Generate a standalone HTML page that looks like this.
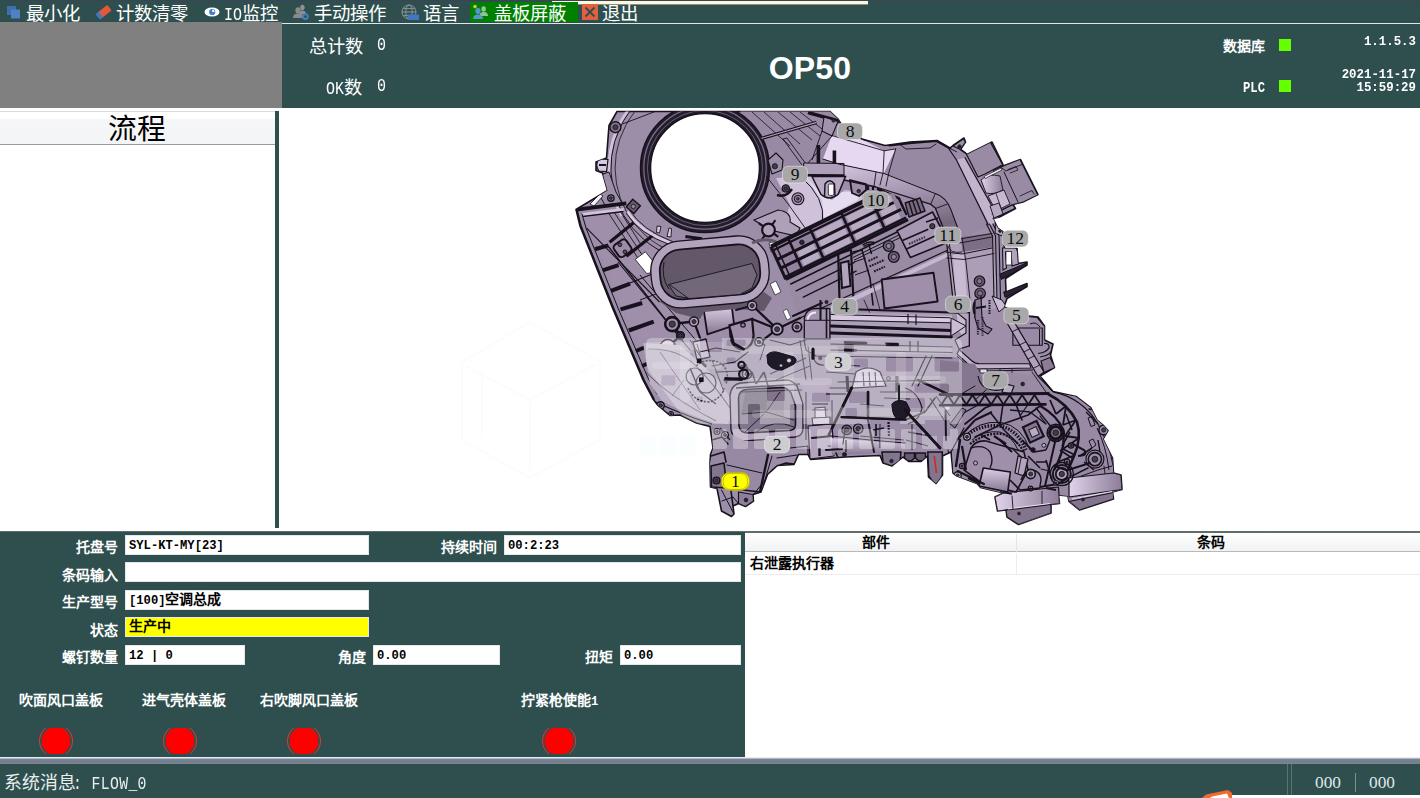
<!DOCTYPE html>
<html lang="zh-CN">
<head>
<meta charset="utf-8">
<title>OP50</title>
<style>
*{box-sizing:border-box;margin:0;padding:0}
html,body{width:1420px;height:798px;overflow:hidden;background:#fff}
body{position:relative;font-family:"Liberation Serif",serif;color:#fff}
.abs{position:absolute}
.m{font-family:"Liberation Mono",monospace}
.t{display:inline-block;transform:scaleY(1.22);transform-origin:0 76%}
.teal{background:#2f4f4f}
/* toolbar */
#toolbar{left:0;top:0;width:1420px;height:24px;background:#2f4f4f}
#toolbar .edge{left:0;top:0;width:1420px;height:1px;background:#3b4357}
#toolbar .cream{left:552px;top:0.5px;width:316px;height:4px;background:#fdf8dc;border-bottom:1px solid #8c8f80}
#toolbar .line{left:282px;top:23px;width:1138px;height:1px;background:#dfe6e6}
.tb{position:absolute;top:3.5px;height:20px;line-height:20px;font-size:18.4px;white-space:nowrap;color:#fff}
.tbi{position:absolute;top:4px;width:18px;height:16px}
#tbgreen{left:469.5px;top:2px;width:108px;height:20px;background:#008000}
/* header */
#grayblk{left:0;top:22px;width:282px;height:86px;background:#808080}
#header{left:282px;top:24px;width:1138px;height:84px;background:#2f4f4f}
.cnt{position:absolute;font-size:18.2px;line-height:20px;margin-top:1.4px;white-space:nowrap}
#op{left:710px;top:49px;width:200px;text-align:center;font-family:"Liberation Sans",sans-serif;font-weight:bold;font-size:32px;line-height:38px;letter-spacing:.2px}
.st{position:absolute;font-weight:bold;font-size:14px;line-height:16px;white-space:nowrap;text-align:right}
.lamp{position:absolute;width:12px;height:12px;background:#66ff00}
/* left panel */
#flowhead{left:0;top:111px;width:275px;height:34px;background:linear-gradient(#ffffff 0,#ffffff 20%,#f5f6f8 24%,#f4f5f7 100%);border-top:1px solid #d9d9d9;border-bottom:1px solid #9a9a9a;color:#000;font-size:28.8px;line-height:35px;padding-right:1px;overflow:hidden;text-align:center}
#divider{left:275px;top:111px;width:4px;height:417px;background:#2f4f4f}
/* bottom form */
#form{left:0;top:532px;width:745px;height:225px;background:#2f4f4f}
#topline{left:0;top:531px;width:1420px;height:2px;background:#5f6d6d}
.lb{position:absolute;font-weight:bold;font-size:14px;line-height:18px;white-space:nowrap;text-align:right;color:#fff}
.in .m{font-size:12.17px}
.in{position:absolute;height:20px;background:#fff;color:#000;font-weight:bold;font-size:14px;line-height:18px;padding-left:3px;white-space:nowrap;overflow:hidden;border:1px solid #e4e8e8}
.cl{position:absolute;font-weight:bold;font-size:14px;line-height:18px;white-space:nowrap;color:#fff}
.led{position:absolute;top:728px;width:34px;height:26px;overflow:hidden}
.led i{position:absolute;left:0;top:-4px;width:34px;height:34px;border-radius:50%;border:1px solid #e03535;background:radial-gradient(circle,#ff0000 0,#ff0000 14px,#3c4a4a 14.6px,#3c4a4a 15.4px,transparent 16px)}
/* table */
#tbl{left:745px;top:533px;width:675px;height:224px;background:#fff;color:#000}
#th{left:0;top:0;width:675px;height:19px;background:linear-gradient(#ffffff,#f1f2f4);border-bottom:1px solid #b9b9b9}
.thc{position:absolute;top:1px;height:18px;line-height:18px;font-weight:bold;font-size:14px;text-align:center;color:#000}
#tr1{left:0;top:20px;width:675px;height:22px;border-bottom:1px solid #ececec}
/* status bar */
#sep{left:0;top:757px;width:1420px;height:7px;background:linear-gradient(#e8ecf0 0,#e8ecf0 1px,#75849a 2px,#708090 5px,#8a8088 7px)}
#status{left:0;top:764px;width:1420px;height:34px;background:#2f4f4f}
</style>
</head>
<body>

<!-- ===== toolbar ===== -->
<div id="toolbar" class="abs">
  <div class="abs edge"></div>
  <div class="abs line"></div>
  <div class="abs cream"></div>
  <div id="tbgreen" class="abs"></div>

  <svg class="tbi" style="left:5px" viewBox="0 0 18 16"><rect x="2" y="2" width="9" height="9" fill="#3f6fae"/><rect x="6" y="5.5" width="9" height="9" fill="#4f82c4"/></svg>
  <span class="tb" style="left:26px">最小化</span>

  <svg class="tbi" style="left:95px" viewBox="0 0 18 16"><g transform="rotate(-38 9 8)"><rect x="3" y="4.5" width="13" height="7" rx="1" fill="#e2593a"/><rect x="1" y="4.5" width="4" height="7" rx="1" fill="#3f77c2"/></g></svg>
  <span class="tb" style="left:116px">计数清零</span>

  <svg class="tbi" style="left:203px" viewBox="0 0 18 16"><ellipse cx="9" cy="8" rx="7.5" ry="4.6" fill="#fff"/><circle cx="9.2" cy="8" r="3.1" fill="#3f7fd0"/><path d="M9.2 8 L9.2 5.6 A2.4 2.4 0 0 1 11.6 8Z" fill="#fff"/></svg>
  <span class="tb" style="left:224px"><span class="m t" style="font-size:15px">IO</span>监控</span>

  <svg class="tbi" style="left:292px" viewBox="0 0 18 16"><ellipse cx="10.4" cy="3.6" rx="2.2" ry="2.8" fill="#8f8f8f"/><path d="M7 11 Q7 6.8 10.6 6.8 Q14 6.8 14 10Z" fill="#8f8f8f"/><ellipse cx="6" cy="6.4" rx="2.6" ry="3.1" fill="#8a8a8a"/><path d="M1 14 Q1 9.6 6 9.6 Q11 9.6 11 14Z" fill="#8a8a8a"/><circle cx="13.4" cy="12.6" r="3.4" fill="#3f7fc8"/><circle cx="13.4" cy="12.6" r="1.3" fill="#2f4f4f"/></svg>
  <span class="tb" style="left:314px">手动操作</span>

  <svg class="tbi" style="left:401px" viewBox="0 0 18 16"><circle cx="8" cy="8" r="7" fill="none" stroke="#8a9494" stroke-width="1"/><ellipse cx="8" cy="8" rx="3.2" ry="7" fill="none" stroke="#8a9494" stroke-width="1"/><path d="M1 8H15M2 4.6H14M2 11.4H14" stroke="#8a9494" stroke-width="1" fill="none"/><rect x="7" y="10.5" width="11" height="5.5" fill="#3f77c2"/></svg>
  <span class="tb" style="left:423px">语言</span>

  <svg class="tbi" style="left:472px" viewBox="0 0 18 16"><ellipse cx="11.6" cy="5" rx="2.3" ry="2.7" fill="#8fc493"/><path d="M7.6 12 Q7.6 8 11.8 8 Q16 8 16 12Z" fill="#8fc493"/><ellipse cx="6" cy="7" rx="2.6" ry="3" fill="#5b93d2"/><path d="M1 15 Q1 10.4 6 10.4 Q11 10.4 11 15Z" fill="#5b93d2"/><circle cx="3" cy="2.6" r="1.8" fill="#d8c23a"/></svg>
  <span class="tb" style="left:494px">盖板屏蔽</span>

  <svg class="tbi" style="left:581px" viewBox="0 0 18 16"><rect x="1" y="0" width="16" height="16" fill="#e0603f"/><path d="M4.5 3.5L13.5 12.5M13.5 3.5L4.5 12.5" stroke="#2f4f4f" stroke-width="1.8" fill="none"/></svg>
  <span class="tb" style="left:602px">退出</span>
</div>

<!-- ===== header ===== -->
<div id="header" class="abs"></div>
<div id="grayblk" class="abs"></div>
<span class="cnt" style="left:309px;top:36px">总计数</span><span class="cnt m t" style="left:377px;top:36px;font-size:15px">0</span>
<span class="cnt" style="left:326px;top:77px"><span class="m t" style="font-size:15px">OK</span>数</span><span class="cnt m t" style="left:377px;top:77px;font-size:15px">0</span>
<div id="op" class="abs">OP50</div>
<span class="st" style="right:155px;top:39px">数据库</span>
<span class="st m" style="right:155px;top:79.8px;font-size:12.2px;transform:scaleY(1.2)">PLC</span>
<div class="lamp" style="left:1279px;top:39px"></div>
<div class="lamp" style="left:1279px;top:80px"></div>
<span class="st m" style="right:4px;top:33.8px;font-size:12.4px;transform:scaleY(1.1)">1.1.5.3</span>
<span class="st m" style="right:4px;top:69px;line-height:12px;font-size:12.4px;transform:scaleY(1.1)">2021-11-17<br>15:59:29</span>

<!-- ===== left panel ===== -->
<div id="flowhead" class="abs">流程</div>
<div id="divider" class="abs"></div>

<!-- ===== CAD image ===== -->
<svg id="cad" class="abs" style="left:279px;top:108px" width="1141" height="424" viewBox="279 108 1141 424">
<!--CAD-->
<defs>
<clipPath id="sil"><path id="silp" d="M617 111.5 L830 111.5 L838 119 L841 124 L862 139 L885 145.5 L910 142 L937 140.5 L950 148 L953 145.5 L964 138 L965.5 142 L960.5 149.5 L965.5 153 L967 154.5 L992 142 L1003 164.5 L1000.5 167 L1020.5 159.5 L1038 194.5 L1023 202 L1013 204.5 L1015.5 208.5 L999.5 217 L993 218.5 L998 228.5 L1003 232 L1004.5 248.5 L1017 248.5 L1018 263.5 L1027 262 L1027 265 L1005.5 278.5 L1006 292 L1027 283.5 L1027 286.5 L1007 298.5 L1004 307 L1029.5 316 L1038 317 L1044.5 326 L1044.5 340 L1053 344 L1050.5 355 L1054.5 367.5 L1040 376 L1053 391.5 L1076 396.5 L1091 408 L1097 420 L1103 425 L1108 430.5 L1103 439 L1112.5 458 L1113.5 473 L1121 475 L1122 489.5 L1112.5 492 L1113.5 499 L1079.5 510 L1069 501.5 L1068 496 L1058.5 495 L1059.5 503.5 L1051 504.5 L1051 513 L1018.5 524.5 L1007 517 L1006 510 L997.5 511 L995 497 L1003.5 493 L980.5 487.5 L977 483.5 L957 476 L953 473 L951 452 L942.5 456 L942.5 475 L936 483.5 L928.5 477 L927.5 456 L921 461.5 L909 461.5 L903 457 L892 466 L883 463 L880 455.5 L845.5 457 L810.5 459.5 L808 454.5 L798.5 454.5 L794 464.5 L777.5 465.5 L767.5 474.5 L761 492 L753 494.5 L753.5 501 L745.5 506.5 L738.5 503.5 L733 506 L734 514 L731.5 516.5 L721.5 511 L717 488.5 L710.5 487 L710 463 L710.5 454.5 L713 448 L710 426.5 L696.5 423 L680 415 L670 415.5 L658 405.5 L653 399 L643 380 L612.5 308 L580 226 L576 209.5 L607.5 190.5 L602.5 173 L596 170.5 L596 162 L606.5 158 L609 125.5 Z"/></clipPath>
<linearGradient id="gTube" x1="0" y1="0" x2="0.35" y2="1"><stop offset="0" stop-color="#d3c5dd"/><stop offset="0.55" stop-color="#a192ad"/><stop offset="1" stop-color="#75697e"/></linearGradient>
<linearGradient id="gV" x1="0" y1="0" x2="0" y2="1"><stop offset="0" stop-color="#dacde5"/><stop offset="1" stop-color="#867892"/></linearGradient>
<linearGradient id="gH" x1="0" y1="0" x2="1" y2="0"><stop offset="0" stop-color="#e0d3ea"/><stop offset="1" stop-color="#8c7c98"/></linearGradient>
</defs>
<path d="M617 111.5 L830 111.5 L838 119 L841 124 L862 139 L885 145.5 L910 142 L937 140.5 L950 148 L953 145.5 L964 138 L965.5 142 L960.5 149.5 L965.5 153 L967 154.5 L992 142 L1003 164.5 L1000.5 167 L1020.5 159.5 L1038 194.5 L1023 202 L1013 204.5 L1015.5 208.5 L999.5 217 L993 218.5 L998 228.5 L1003 232 L1004.5 248.5 L1017 248.5 L1018 263.5 L1027 262 L1027 265 L1005.5 278.5 L1006 292 L1027 283.5 L1027 286.5 L1007 298.5 L1004 307 L1029.5 316 L1038 317 L1044.5 326 L1044.5 340 L1053 344 L1050.5 355 L1054.5 367.5 L1040 376 L1053 391.5 L1076 396.5 L1091 408 L1097 420 L1103 425 L1108 430.5 L1103 439 L1112.5 458 L1113.5 473 L1121 475 L1122 489.5 L1112.5 492 L1113.5 499 L1079.5 510 L1069 501.5 L1068 496 L1058.5 495 L1059.5 503.5 L1051 504.5 L1051 513 L1018.5 524.5 L1007 517 L1006 510 L997.5 511 L995 497 L1003.5 493 L980.5 487.5 L977 483.5 L957 476 L953 473 L951 452 L942.5 456 L942.5 475 L936 483.5 L928.5 477 L927.5 456 L921 461.5 L909 461.5 L903 457 L892 466 L883 463 L880 455.5 L845.5 457 L810.5 459.5 L808 454.5 L798.5 454.5 L794 464.5 L777.5 465.5 L767.5 474.5 L761 492 L753 494.5 L753.5 501 L745.5 506.5 L738.5 503.5 L733 506 L734 514 L731.5 516.5 L721.5 511 L717 488.5 L710.5 487 L710 463 L710.5 454.5 L713 448 L710 426.5 L696.5 423 L680 415 L670 415.5 L658 405.5 L653 399 L643 380 L612.5 308 L580 226 L576 209.5 L607.5 190.5 L602.5 173 L596 170.5 L596 162 L606.5 158 L609 125.5 Z" fill="#9c8da8" stroke="#17121d" stroke-width="1.6" stroke-linejoin="round"/>
<g clip-path="url(#sil)">
<path d="M740.0 111.0 L832.0 111.0 L845.0 124.0 L832.0 136.0 L823.0 160.0 L804.0 163.0 L790.0 170.0 L770.0 150.0 L752.0 128.0Z" fill="#9889a4" stroke="none" stroke-width="1" stroke-linejoin="round" />
<path d="M831.8 135.5 L862.0 139.5 L884.2 150.8 L895.7 148.9 L884.0 173.5 L839.5 164.3 L822.9 159.1Z" fill="#e5d8f0" stroke="none" stroke-width="1" stroke-linejoin="round" />
<path d="M839.5 164.3 L884.0 173.5 L935.3 193.6 L947.3 204.1 L957.3 226.2 L958.0 236.0 L943.3 236.0 L935.3 208.1 L930.3 204.1 L876.1 187.0 L844.0 180.0Z" fill="url(#gTube)" stroke="none" stroke-width="1" stroke-linejoin="round" />
<path d="M895.7 148.9 L910.0 143.0 L937.0 141.5 L948.0 147.5 L956.5 160.0 L990.0 226.0 L962.0 238.0 L957.3 226.2 L947.3 204.1 L935.3 193.6 L884.0 173.5Z" fill="#9788a3" stroke="none" stroke-width="1" stroke-linejoin="round" />
<path d="M956.5 160.0 L964.8 157.2 L999.2 219.2 L990.0 226.0Z" fill="#c2b4cd" stroke="none" stroke-width="1" stroke-linejoin="round" />
<path d="M776.0 178.0 L812.0 176.0 L822.0 195.0 L832.0 200.0 L845.0 190.0 L862.0 192.0 L862.0 203.0 L826.0 221.0 L800.0 232.0 L784.0 222.0 L790.0 205.0Z" fill="#cfc1d9" stroke="none" stroke-width="1" stroke-linejoin="round" />
<path d="M805.0 176.0 L822.0 195.0 L832.0 200.0 L842.0 192.0 L860.0 192.0 L858.0 200.0 L824.0 218.0 L822.0 200.0Z" fill="#e7dbf1" stroke="none" stroke-width="1" stroke-linejoin="round" />
<path d="M786.0 280.0 L906.0 220.0 L934.0 212.0 L948.0 244.0 L952.0 296.0 L940.0 300.0 L860.0 318.0 L800.0 320.0Z" fill="#9a8ba5" stroke="none" stroke-width="1" stroke-linejoin="round" />
<path d="M947.0 245.0 L992.0 238.0 L998.0 300.0 L1000.0 330.0 L970.0 345.0 L953.0 300.0Z" fill="#ad9eb8" stroke="none" stroke-width="1" stroke-linejoin="round" />
<path d="M961.6 237.0 L992.2 233.0 L992.2 247.3 L962.0 252.0Z" fill="#7b6e85" stroke="none" stroke-width="1" stroke-linejoin="round" />
<path d="M953.0 255.0 L964.0 253.0 L970.0 345.0 L958.0 330.0Z" fill="#c8bad2" stroke="none" stroke-width="1" stroke-linejoin="round" />
<path d="M583.0 214.0 L624.0 210.0 L660.0 245.0 L650.0 275.0 L700.0 340.0 L690.0 352.0 L655.0 385.0Z" fill="#9f8faa" stroke="none" stroke-width="1" stroke-linejoin="round" />
<path d="M703.6 308.8 L731.7 306.2 L734.2 325.4 L707.4 334.4Z" fill="url(#gV)" stroke="#17121d" stroke-width="1.8" stroke-linejoin="round" />
<path d="M729.5 325.4 L752.1 319 L753.6 336 Q752 348 743 349.5 Q732 348 730.5 336Z" fill="#9f8faa" stroke="#17121d" stroke-width="2.2"/>
<path d="M969.0 312.0 L1004.0 307.0 L1030.0 316.0 L1045.0 326.0 L1045.0 340.0 L1040.0 376.0 L1050.0 392.0 L975.0 392.0 L959.0 350.0 L969.0 345.0Z" fill="#9f8faa" stroke="none" stroke-width="1" stroke-linejoin="round" />
<path d="M1050.0 392.0 L1076.0 396.5 L1091.0 408.0 L1103.0 425.0 L1112.5 458.0 L1113.5 473.0 L1122.0 489.5 L1079.5 510.0 L1018.5 524.5 L995.0 497.0 L953.0 473.0 L951.0 400.0 L975.0 394.0Z" fill="#9889a4" stroke="none" stroke-width="1" stroke-linejoin="round" />
<path d="M621.9 216.0 A96 96 0 0 1 645.9 92.4" stroke="#d0c2db" stroke-width="3" fill="none"/>
<path d="M669.8 255.2 A94 94 0 0 1 691.9 74.9" stroke="#17121d" stroke-width="1" fill="none"/>
<path d="M671.3 251.4 A90 90 0 0 1 698.7 78.2" stroke="#17121d" stroke-width="0.8" fill="none"/>
<circle cx="705.0" cy="168.0" r="64.5" fill="#241d2d" stroke="#17121d" stroke-width="1.5"/>
<circle cx="705.0" cy="168.0" r="61.2" fill="none" stroke="#7f718b" stroke-width="1.2"/>
<circle cx="705.0" cy="168.0" r="57.6" fill="none" stroke="#645a6b" stroke-width="1.0"/>
<circle cx="705.0" cy="168.0" r="54.5" fill="#ffffff" stroke="#17121d" stroke-width="1.6"/>
<path d="M622.4 124.0L654.4 111.8" stroke="#17121d" stroke-width="0.9" fill="none" />
<circle cx="615.4" cy="127.2" r="5.5" fill="#83758e" stroke="#17121d" stroke-width="1.4"/>
<circle cx="615.4" cy="127.2" r="2.475" fill="#433c49" stroke="#17121d" stroke-width="0.8"/>
<path d="M608 159.5 L599 159 Q594.5 165 599 171 L606.5 171.5Z" fill="#d7cae1" stroke="#17121d" stroke-width="1.2"/>
<path d="M599.0 165.0L606.0 165.0" stroke="#17121d" stroke-width="1.8" fill="none" />
<path d="M603.0 174.0 L609.0 172.0 L616.0 192.0 L622.0 203.0 L605.0 205.0 L600.0 196.0Z" fill="#9c8da8" stroke="#17121d" stroke-width="1" stroke-linejoin="round" />
<circle cx="610.9" cy="198.1" r="3.2" fill="#91829d" stroke="#17121d" stroke-width="1.4"/>
<circle cx="610.9" cy="198.1" r="1.4400000000000002" fill="#433c49" stroke="#17121d" stroke-width="0.8"/>
<path d="M590.0 204.0 L600.0 194.0 L603.0 196.0 L594.0 206.0Z" fill="#f7f2fa" stroke="#17121d" stroke-width="0.8" stroke-linejoin="round" />
<path d="M582.0 213.0 L623.7 208.0 L624.0 212.0 L583.0 217.5Z" fill="#d1c4dc" stroke="none" stroke-width="1" stroke-linejoin="round" />
<path d="M576.4 209.6L626.3 203.4" stroke="#17121d" stroke-width="3.6" fill="none" />
<path d="M582.8 216.5L623.7 211.5" stroke="#17121d" stroke-width="1.6" fill="none" />
<g transform="rotate(40 633.3 206.4)"><rect x="628.3" y="201.4" width="10" height="10" fill="#645a6b" stroke="#17121d" stroke-width="1.4"/></g>
<circle cx="633.3" cy="206.4" r="2.2" fill="#91829d" stroke="#17121d" stroke-width="0.8"/>
<path d="M576.0 209.5 L580.0 226.0 L612.5 308.0 L643.0 380.0 L653.0 399.0" fill="none" stroke="#17121d" stroke-width="3.4" stroke-linejoin="round" stroke-linecap="round" />
<path d="M582.0 214.0 L586.0 228.0 L618.0 308.0 L648.0 378.0 L657.0 394.0" fill="none" stroke="#17121d" stroke-width="1" stroke-linejoin="round" stroke-linecap="round" />
<path d="M594.9 249.2L608.4 245.4" stroke="#17121d" stroke-width="4" fill="none" />
<path d="M602.6 270.3L618.6 265.2" stroke="#17121d" stroke-width="4" fill="none" />
<path d="M610.9 290.8L630.1 283.7" stroke="#17121d" stroke-width="4" fill="none" />
<path d="M620.5 309.4L642.2 303.0" stroke="#17121d" stroke-width="4" fill="none" />
<path d="M628.8 330.5L653.7 321.6" stroke="#17121d" stroke-width="4" fill="none" />
<path d="M635.8 351.0L646.7 346.6" stroke="#17121d" stroke-width="4" fill="none" />
<path d="M642.0 366.0L650.0 362.5" stroke="#17121d" stroke-width="4" fill="none" />
<path d="M609.6 242.2L633.9 222.4" stroke="#17121d" stroke-width="3.2" fill="none" />
<path d="M626.3 256.3L654.4 233.9" stroke="#17121d" stroke-width="3.2" fill="none" />
<path d="M608.4 212.8L646.7 271.6" stroke="#17121d" stroke-width="0.9" fill="none" />
<path d="M614.0 212.0L652.0 270.0" stroke="#17121d" stroke-width="0.9" fill="none" />
<path d="M620.0 211.0L640.0 243.0" stroke="#17121d" stroke-width="0.9" fill="none" />
<path d="M586.6 228.1L659.5 302.0" stroke="#17121d" stroke-width="1.1" fill="none" />
<path d="M608.0 246.0L676.0 333.0" stroke="#17121d" stroke-width="1.4" fill="none" />
<path d="M618.0 262.0L690.0 350.0" stroke="#17121d" stroke-width="1.1" fill="none" />
<path d="M640.0 275.0L700.0 345.0" stroke="#17121d" stroke-width="1.0" fill="none" />
<path d="M630.0 283.0L662.0 270.0" stroke="#17121d" stroke-width="1.2" fill="none" />
<path d="M640.0 300.0L680.0 285.0" stroke="#17121d" stroke-width="1.0" fill="none" />
<path d="M635.2 259.4 L645.4 251.8 L653.1 261.4 L650.5 272.9 L646.7 273.5Z" fill="#ffffff" stroke="#17121d" stroke-width="0.8" stroke-linejoin="round" />
<g transform="rotate(-35 622.5 248.2)"><rect x="615" y="241" width="15" height="14.5" rx="3.5" fill="#9c8da8" stroke="#17121d" stroke-width="2"/></g>
<circle cx="619.9" cy="244.7" r="1.9" fill="#544b5c" stroke="#17121d" stroke-width="0.9"/>
<circle cx="625.0" cy="251.8" r="1.9" fill="#544b5c" stroke="#17121d" stroke-width="0.9"/>
<path d="M627.5 211.5 Q640 232 672.3 243.5" stroke="#d7cae1" stroke-width="2.6" fill="none"/>
<path d="M626 213 Q639 234 671 245.2" stroke="#17121d" stroke-width="0.9" fill="none"/>
<path d="M629.5 210 Q642 230 673 241.8" stroke="#17121d" stroke-width="0.9" fill="none"/>
<path d="M657.0 226.0 L661.0 226.5 L659.5 233.0 L656.5 232.5Z" fill="#d7cae1" stroke="#17121d" stroke-width="0.9" stroke-linejoin="round" />
<path d="M669.0 228.0 L671.5 228.5 L671.0 237.0 L667.0 236.5Z" fill="#d7cae1" stroke="#17121d" stroke-width="0.9" stroke-linejoin="round" />
<path d="M685.4 236.4L702.0 238.8" stroke="#17121d" stroke-width="3" fill="none" />
<path d="M664.0 296.0 L680.0 308.0 L745.0 303.0 L764.0 292.0 L772.0 298.0 L764.0 311.0 L735.0 309.0 L704.0 312.0 L700.0 319.0 L676.0 313.0 L660.0 302.0Z" fill="#625869" stroke="none" stroke-width="1" stroke-linejoin="round" />
<g transform="rotate(-5 709 272)">
<rect x="651" y="238.5" width="118" height="67" rx="30" fill="#b3a4be" stroke="#17121d" stroke-width="1.3"/>
<rect x="660" y="247" width="100" height="50" rx="21" fill="#625869" stroke="#17121d" stroke-width="1.8"/>
</g>
<path d="M668.4 284.6 L752 263.5 L757 275 L752 288 L740 294.5 L690 298.5 L676 296Z" fill="#72687a" stroke="#17121d" stroke-width="0.9"/>
<path d="M670.0 285.0L688.0 298.0" stroke="#17121d" stroke-width="0.9" fill="none" />
<path d="M664 262 Q661 278 669 289" stroke="#17121d" stroke-width="0.9" fill="none"/>
<path d="M769.0 243.0 L776.0 241.0 L777.0 250.0 L771.0 252.0Z" fill="#ffffff" stroke="#17121d" stroke-width="0.7" stroke-linejoin="round" />
<path d="M770.0 284.0 L776.0 281.0 L781.0 292.0 L775.0 295.0Z" fill="#ffffff" stroke="#17121d" stroke-width="0.7" stroke-linejoin="round" />
<path d="M752.0 112.0L790.0 146.0" stroke="#17121d" stroke-width="0.8" fill="none" />
<path d="M764.0 112.0L800.0 144.0" stroke="#17121d" stroke-width="0.8" fill="none" />
<path d="M778.0 112.0L812.0 140.0" stroke="#17121d" stroke-width="0.8" fill="none" />
<path d="M790.0 112.0L820.0 136.0" stroke="#17121d" stroke-width="0.8" fill="none" />
<path d="M800.0 112.0L826.0 132.0" stroke="#17121d" stroke-width="0.8" fill="none" />
<path d="M761.5 138.4L816.5 122.4" stroke="#17121d" stroke-width="3.4" fill="none" />
<path d="M761.5 138.4L816.5 122.4" stroke="#b3a4be" stroke-width="1.1" fill="none" />
<path d="M808.0 112.5L846.0 123.0" stroke="#17121d" stroke-width="3.4" fill="none" />
<path d="M824.0 117.0 L838.0 121.5 L832.0 136.0 L822.0 131.0Z" fill="#a192ad" stroke="#17121d" stroke-width="1.1" stroke-linejoin="round" />
<circle cx="833.5" cy="120.6" r="1.6" fill="#38313d" stroke="#17121d" stroke-width="0.7"/>
<path d="M832.0 136.0L803.5 168.0" stroke="#17121d" stroke-width="0.9" fill="none" />
<path d="M822.0 131.0L812.0 160.0" stroke="#17121d" stroke-width="0.9" fill="none" />
<path d="M783.0 139.0 L787.0 138.0 L806.0 164.0" fill="none" stroke="#17121d" stroke-width="0.9" stroke-linejoin="round" stroke-linecap="round" />
<path d="M783.0 139.0L802.0 165.0" stroke="#17121d" stroke-width="0.9" fill="none" />
<path d="M768.0 160.0 L776.0 153.0 L783.0 160.0 L782.0 170.0 L772.0 174.0Z" fill="#9c8da8" stroke="#17121d" stroke-width="1.1" stroke-linejoin="round" />
<circle cx="774.9" cy="166.2" r="2.6" fill="#433c49" stroke="#17121d" stroke-width="0.8"/>
<path d="M818.4 145.0L818.4 175.0" stroke="#17121d" stroke-width="3.6" fill="none" />
<path d="M834.4 150.4L834.4 174.0" stroke="#17121d" stroke-width="3.6" fill="none" />
<path d="M803.7 163.0 L844.0 163.5 L844.0 175.5 L803.7 175.0Z" fill="#ad9fb9" stroke="#17121d" stroke-width="1" stroke-linejoin="round" />
<path d="M806.0 175.3L844.5 175.6" stroke="#17121d" stroke-width="2.6" fill="none" />
<path d="M812 176.5 L821 194.5 Q829 201.5 838 194.5 L845.5 176.5Z" fill="#b8aac3" stroke="#17121d" stroke-width="1.5"/>
<path d="M824.5 196 L825 184 Q829.6 177.5 834.5 184 L835 196" fill="none" stroke="#17121d" stroke-width="1.4"/>
<rect x="828.3" y="184" width="5.6" height="11.4" rx="1.5" fill="#ffffff" stroke="#17121d" stroke-width="0.8"/>
<circle cx="785.8" cy="188.5" r="3.6" fill="#544b5c" stroke="#17121d" stroke-width="1.4"/>
<circle cx="785.8" cy="188.5" r="1.62" fill="#433c49" stroke="#17121d" stroke-width="0.8"/>
<path d="M777 195 Q786 198 792 189" stroke="#17121d" stroke-width="2.4" fill="none"/>
<circle cx="797.9" cy="198.8" r="6" fill="#a899b3" stroke="#17121d" stroke-width="1.1"/>
<circle cx="797.9" cy="198.8" r="3.6" fill="#91829d" stroke="#17121d" stroke-width="1.0"/>
<circle cx="797.9" cy="198.8" r="1.4" fill="#433c49" stroke="#17121d" stroke-width="0.6"/>
<path d="M850.0 180.0 L866.0 184.0 L866.0 190.0 L859.0 196.0 L852.0 193.0Z" fill="#9c8da8" stroke="#17121d" stroke-width="1.8" stroke-linejoin="round" />
<circle cx="858.7" cy="191.1" r="1.8" fill="#38313d" stroke="#17121d" stroke-width="0.7"/>
<path d="M868.0 186.0L868.0 190.0" stroke="#17121d" stroke-width="2.2" fill="none" />
<path d="M873.0 187.0L873.0 190.0" stroke="#17121d" stroke-width="2.2" fill="none" />
<path d="M800 176 Q826 198 822.5 222" stroke="#17121d" stroke-width="1" fill="none"/>
<path d="M766 176 Q790 205 808 232" stroke="#17121d" stroke-width="0.9" fill="none"/>
<path d="M754 220 L778 210 Q792 212 790 222 L800 228 L796 236 L770 230 Z" fill="#afa0ba" stroke="#17121d" stroke-width="1.1"/>
<circle cx="768.5" cy="230.0" r="6.4" fill="#afa0ba" stroke="#17121d" stroke-width="2.2"/>
<path d="M773.4 233.4L778.3 236.9" stroke="#17121d" stroke-width="2" fill="none" />
<path d="M765.1 234.9L761.6 239.8" stroke="#17121d" stroke-width="2" fill="none" />
<path d="M763.6 226.6L758.7 223.1" stroke="#17121d" stroke-width="2" fill="none" />
<path d="M771.9 225.1L775.4 220.2" stroke="#17121d" stroke-width="2" fill="none" />
<path d="M752 243 Q766 236 780 244" stroke="#645a6b" stroke-width="3" fill="none"/>
<path d="M862.5 138.7 L889.4 145.1 L912.0 142.6 L937.0 140.8 L950.0 148.0" fill="none" stroke="#17121d" stroke-width="2.6" stroke-linejoin="round" stroke-linecap="round" />
<path d="M900.0 144.6 L906.0 149.0 L930.0 148.0 L936.0 144.0" fill="none" stroke="#17121d" stroke-width="0.9" stroke-linejoin="round" stroke-linecap="round" />
<path d="M831.8 135.5 L884.2 150.8 L895.7 148.9" fill="none" stroke="#17121d" stroke-width="0.9" stroke-linejoin="round" stroke-linecap="round" />
<path d="M884.2 150.8 L883.0 173.2 L880.0 185.0" fill="none" stroke="#17121d" stroke-width="0.9" stroke-linejoin="round" stroke-linecap="round" />
<path d="M895.7 148.9 L889.0 172.0 L886.0 186.0" fill="none" stroke="#17121d" stroke-width="0.9" stroke-linejoin="round" stroke-linecap="round" />
<path d="M822.9 159.1 L839.5 164.3 L884.0 173.5 L935.3 193.6" fill="none" stroke="#17121d" stroke-width="1.0" stroke-linejoin="round" stroke-linecap="round" />
<path d="M935.3 193.6 Q946 197 951 210 L958.5 230" stroke="#17121d" stroke-width="1.1" fill="none"/>
<path d="M844.0 180.0 L876.1 187.0 L930.3 204.1 L935.3 208.1 L943.3 228.0" fill="none" stroke="#17121d" stroke-width="1.3" stroke-linejoin="round" stroke-linecap="round" />
<path d="M935.3 193.6L930.8 204.0" stroke="#17121d" stroke-width="0.9" fill="none" />
<path d="M947.3 204.1L936.0 208.3" stroke="#17121d" stroke-width="0.9" fill="none" />
<path d="M876.0 171.8L874.0 186.5" stroke="#17121d" stroke-width="0.9" fill="none" />
<path d="M878.0 189.0 L899.0 198.5 L906.0 214.0" fill="none" stroke="#17121d" stroke-width="2.6" stroke-linejoin="round" stroke-linecap="round" />
<path d="M937.0 141.5 L948.0 147.5 L956.5 160.0 L988.2 224.7" fill="none" stroke="#17121d" stroke-width="1.2" stroke-linejoin="round" stroke-linecap="round" />
<path d="M964.8 157.2L999.2 219.2" stroke="#17121d" stroke-width="1.2" fill="none" />
<path d="M948.0 147.5L957.0 152.0" stroke="#17121d" stroke-width="0.9" fill="none" />
<path d="M960.5 149.5 L953 146 L963.5 138.8 L965.5 142Z" fill="#9f8faa" stroke="#17121d" stroke-width="1.3"/>
<circle cx="959.5" cy="146.5" r="1.8" fill="#2a2234" stroke="#17121d" stroke-width="0.6"/>
<path d="M966.2 153.8 L990.3 142.0 L1002.7 164.8 L985.0 174.0 L978.0 177.0Z" fill="#9a8ba5" stroke="#17121d" stroke-width="1.2" stroke-linejoin="round" />
<path d="M1002.7 166.2 L1019.9 159.3 L1037.8 195.1 L1023.3 202.0 L1012.3 204.8 L1000.0 211.0 L990.0 186.0 L994.0 170.0Z" fill="#9a8ba5" stroke="#17121d" stroke-width="1.2" stroke-linejoin="round" />
<path d="M981 180 Q988 173 1000 176 L1003 190 Q994 195 986 193Z" fill="url(#gH)" stroke="#17121d" stroke-width="0.9"/>
<path d="M984.0 176.5 L1001.0 168.0 L1002.0 170.0 L985.0 178.5Z" fill="#f7f2fa" stroke="#17121d" stroke-width="0.7" stroke-linejoin="round" />
<path d="M988.0 196.0 L1004.0 190.0 L1010.0 204.0 L996.0 211.0Z" fill="#c7b9d2" stroke="#17121d" stroke-width="0.9" stroke-linejoin="round" />
<path d="M996.0 193.5L1001.0 208.0" stroke="#17121d" stroke-width="0.8" fill="none" />
<path d="M1000.5 167.0 L1006.0 171.0 L1022.0 164.5" fill="none" stroke="#17121d" stroke-width="0.9" stroke-linejoin="round" stroke-linecap="round" />
<path d="M1004.0 172.0 L1018.0 202.0" fill="none" stroke="#17121d" stroke-width="1" stroke-linejoin="round" stroke-linecap="round" />
<path d="M1008.0 169.5 L1016.0 166.5 L1018.0 170.0 L1010.0 173.0" fill="none" stroke="#17121d" stroke-width="0.8" stroke-linejoin="round" stroke-linecap="round" />
<path d="M1020.0 196.0 L1032.0 190.5 L1034.0 194.0" fill="none" stroke="#17121d" stroke-width="0.8" stroke-linejoin="round" stroke-linecap="round" />
<path d="M993.0 218.5 L1015.5 208.5" fill="none" stroke="#17121d" stroke-width="1.2" stroke-linejoin="round" stroke-linecap="round" />
<path d="M992.0 214.0 L1012.0 205.0" fill="none" stroke="#17121d" stroke-width="0.9" stroke-linejoin="round" stroke-linecap="round" />
<path d="M990.0 206.0 L999.0 203.0 L1003.0 214.0 L994.0 218.0Z" fill="#b7a8c2" stroke="#17121d" stroke-width="0.9" stroke-linejoin="round" />
<path d="M771.0 246.7 L882.4 192.1 L894.3 194.3 L907.9 219.5 L785.8 279.3Z" fill="#92829e" stroke="none" stroke-width="1" stroke-linejoin="round" />
<path d="M814.8 232.0 L840.9 219.2 L843.7 225.4 L817.6 238.2Z" fill="#b8aac3" stroke="none" stroke-width="1" stroke-linejoin="round" />
<path d="M846.3 216.6 L870.5 204.7 L873.3 210.9 L849.1 222.8Z" fill="#b8aac3" stroke="none" stroke-width="1" stroke-linejoin="round" />
<path d="M875.9 202.1 L890.3 195.0 L893.1 201.2 L878.7 208.3Z" fill="#b8aac3" stroke="none" stroke-width="1" stroke-linejoin="round" />
<path d="M797.3 251.4 L813.4 243.4 L816.1 249.3 L799.9 257.2Z" fill="#b8aac3" stroke="none" stroke-width="1" stroke-linejoin="round" />
<path d="M818.8 240.8 L844.9 228.0 L847.5 233.9 L821.5 246.7Z" fill="#b8aac3" stroke="none" stroke-width="1" stroke-linejoin="round" />
<path d="M850.2 225.4 L874.5 213.5 L877.2 219.4 L852.9 231.3Z" fill="#b8aac3" stroke="none" stroke-width="1" stroke-linejoin="round" />
<path d="M879.9 210.9 L894.3 203.8 L896.9 209.7 L882.5 216.8Z" fill="#b8aac3" stroke="none" stroke-width="1" stroke-linejoin="round" />
<path d="M801.1 259.8 L817.3 251.9 L819.9 257.8 L803.8 265.7Z" fill="#b8aac3" stroke="none" stroke-width="1" stroke-linejoin="round" />
<path d="M822.7 249.3 L848.7 236.5 L851.4 242.4 L825.3 255.1Z" fill="#b8aac3" stroke="none" stroke-width="1" stroke-linejoin="round" />
<path d="M854.1 233.9 L878.3 222.0 L881.0 227.9 L856.8 239.7Z" fill="#b8aac3" stroke="none" stroke-width="1" stroke-linejoin="round" />
<path d="M883.7 219.4 L898.1 212.3 L900.8 218.2 L886.4 225.2Z" fill="#b8aac3" stroke="none" stroke-width="1" stroke-linejoin="round" />
<path d="M771.0 246.7L881.5 192.6" stroke="#17121d" stroke-width="4.2" fill="none" />
<path d="M772.8 250.6L884.1 196.1" stroke="#17121d" stroke-width="2.2" fill="none" />
<path d="M776.9 259.7L893.7 202.5" stroke="#17121d" stroke-width="3.0" fill="none" />
<path d="M780.8 268.2L901.1 209.3" stroke="#17121d" stroke-width="3.0" fill="none" />
<path d="M784.8 277.0L906.0 217.6" stroke="#17121d" stroke-width="2.2" fill="none" />
<path d="M785.8 279.3L907.9 219.5" stroke="#17121d" stroke-width="3.2" fill="none" />
<path d="M771.0 246.7L785.8 279.3" stroke="#17121d" stroke-width="3" fill="none" />
<path d="M775.5 244.5L790.3 277.1" stroke="#17121d" stroke-width="1.5" fill="none" />
<path d="M788.1 238.3L802.9 270.9" stroke="#17121d" stroke-width="2.6" fill="none" />
<path d="M809.6 227.8L824.4 260.4" stroke="#17121d" stroke-width="2.6" fill="none" />
<path d="M841.0 212.4L855.8 245.0" stroke="#17121d" stroke-width="2.6" fill="none" />
<path d="M870.7 197.9L885.5 230.5" stroke="#17121d" stroke-width="2.6" fill="none" />
<circle cx="801.9" cy="242.3" r="2.4" fill="#2a2234" stroke="#17121d" stroke-width="0.6"/>
<path d="M799.9 259.2L816.1 251.3" stroke="#17121d" stroke-width="1.6" fill="none" />
<path d="M905.2 203.0 L920.0 198.0 L925.0 211.0 L909.0 217.0Z" fill="#766a7f" stroke="#17121d" stroke-width="1.4" stroke-linejoin="round" />
<path d="M908.9 201.8L913.0 215.5" stroke="#17121d" stroke-width="1.4" fill="none" />
<path d="M912.6 200.5L917.0 214.0" stroke="#17121d" stroke-width="1.4" fill="none" />
<path d="M916.3 199.2L921.0 212.5" stroke="#17121d" stroke-width="1.4" fill="none" />
<path d="M790.3 284.3L923.2 219.2" stroke="#17121d" stroke-width="1.6" fill="none" />
<path d="M795.6 291.2L854.9 262.2" stroke="#17121d" stroke-width="1.4" fill="none" />
<path d="M802.8 297.3L856.6 270.9" stroke="#17121d" stroke-width="1.4" fill="none" />
<path d="M852.8 257.6L924.6 222.4" stroke="#17121d" stroke-width="1.0" fill="none" />
<path d="M854.0 260.2L925.8 225.0" stroke="#17121d" stroke-width="1.0" fill="none" />
<path d="M838.2 254.0 L839.5 300.0" fill="none" stroke="#17121d" stroke-width="2.2" stroke-linejoin="round" stroke-linecap="round" />
<path d="M851.0 250.0 L853.5 300.0" fill="none" stroke="#17121d" stroke-width="2.2" stroke-linejoin="round" stroke-linecap="round" />
<path d="M840.5 263 L848.5 261 L850.5 286 L842 288Z" fill="#b2a3bd" stroke="#17121d" stroke-width="2"/>
<path d="M838.5 254.0L851.0 250.0" stroke="#17121d" stroke-width="1.6" fill="none" />
<path d="M853.0 252.0 L862.0 250.0 L870.0 278.0 L873.0 305.0" fill="none" stroke="#17121d" stroke-width="1.6" stroke-linejoin="round" stroke-linecap="round" />
<path d="M854.0 262.0L866.0 258.0" stroke="#17121d" stroke-width="1.0" fill="none" />
<path d="M855.0 275.0L869.0 270.0" stroke="#17121d" stroke-width="1.0" fill="none" />
<path d="M897.0 230.7 L932.5 212.0 L941.0 228.0 L946.0 243.0 L910.4 257.5Z" fill="#a697b2" stroke="#17121d" stroke-width="1.6" stroke-linejoin="round" />
<path d="M902.5 240.5L928.3 229.2" stroke="#17121d" stroke-width="1.6" fill="none" />
<path d="M906.5 249.0L935.0 236.0" stroke="#17121d" stroke-width="1.6" fill="none" />
<path d="M909.0 244.0L925.0 237.0" stroke="#3a3145" stroke-width="2.2" fill="none" stroke-dasharray="1.6 1.1"/>
<circle cx="932.3" cy="226.2" r="2.6" fill="#433c49" stroke="#17121d" stroke-width="1.0"/>
<path d="M926.0 222.0L938.0 218.0" stroke="#17121d" stroke-width="1.6" fill="none" />
<path d="M862.5 245 Q868.5 240.5 875 242.6 M863.5 246.4 Q868.8 243.2 874 244.2 M868.6 243.6 L871.6 254" stroke="#17121d" stroke-width="1.5" fill="none"/>
<circle cx="888.7" cy="246.0" r="5.4" fill="#6c6274" stroke="#17121d" stroke-width="1.3"/>
<circle cx="888.7" cy="246.0" r="2.6" fill="#91829d" stroke="#17121d" stroke-width="0.8"/>
<circle cx="893.8" cy="256.9" r="5.4" fill="#6c6274" stroke="#17121d" stroke-width="1.3"/>
<circle cx="893.8" cy="256.9" r="2.6" fill="#91829d" stroke="#17121d" stroke-width="0.8"/>
<path d="M868.5 261.0L877.5 256.9" stroke="#1d1824" stroke-width="2.0" fill="none" stroke-dasharray="1.8 0.9"/>
<path d="M869.5 266.5L884.5 259.8" stroke="#1d1824" stroke-width="2.0" fill="none" stroke-dasharray="1.8 0.9"/>
<path d="M874.0 271.5L885.0 266.6" stroke="#1d1824" stroke-width="2.0" fill="none" stroke-dasharray="1.8 0.9"/>
<path d="M800.0 318.0L948.0 250.0" stroke="#17121d" stroke-width="1.2" fill="none" />
<path d="M804.0 322.0L950.0 255.0" stroke="#17121d" stroke-width="0.9" fill="none" />
<path d="M802.0 320.0 L948.0 252.5 L949.5 256.0 L806.0 324.0Z" fill="#c6b7d1" stroke="none" stroke-width="1" stroke-linejoin="round" />
<path d="M881.7 279.5 L933.5 272.8 L937.6 301.5 L884.5 308.5Z" fill="#9f8faa" stroke="#17121d" stroke-width="1.9" stroke-linejoin="round" />
<path d="M873.0 284.0 L880.0 310.0" fill="none" stroke="#17121d" stroke-width="0.8" stroke-linejoin="round" stroke-linecap="round" />
<path d="M864.0 300.0 L872.0 318.0" fill="none" stroke="#17121d" stroke-width="0.8" stroke-linejoin="round" stroke-linecap="round" />
<path d="M946.9 244.7 L952.6 296.0" fill="none" stroke="#17121d" stroke-width="1.3" stroke-linejoin="round" stroke-linecap="round" />
<path d="M949.5 244.5 L955.5 296.0" fill="none" stroke="#17121d" stroke-width="1.0" stroke-linejoin="round" stroke-linecap="round" />
<path d="M962.0 238.0 L966.0 262.0 L970.0 300.0" fill="none" stroke="#17121d" stroke-width="0.9" stroke-linejoin="round" stroke-linecap="round" />
<path d="M946.0 252.0 L962.0 254.0 L992.0 248.0" fill="none" stroke="#17121d" stroke-width="1.0" stroke-linejoin="round" stroke-linecap="round" />
<path d="M947.0 258.0 L964.0 259.5 L994.0 253.5" fill="none" stroke="#17121d" stroke-width="0.9" stroke-linejoin="round" stroke-linecap="round" />
<path d="M959.6 239.0 L992.0 233.5" fill="none" stroke="#17121d" stroke-width="0.9" stroke-linejoin="round" stroke-linecap="round" />
<path d="M960.0 243.0 L992.0 237.0" fill="none" stroke="#17121d" stroke-width="0.9" stroke-linejoin="round" stroke-linecap="round" />
<path d="M948 246 Q950 254 962 252" stroke="#17121d" stroke-width="0.9" fill="none"/>
<path d="M986.5 224.0 L992.5 236.0 L994.0 300.0" fill="none" stroke="#17121d" stroke-width="1.1" stroke-linejoin="round" stroke-linecap="round" />
<path d="M989.5 224.0 L995.5 236.0 L997.0 300.0" fill="none" stroke="#17121d" stroke-width="1.1" stroke-linejoin="round" stroke-linecap="round" />
<path d="M993.0 224.0 L999.0 236.0 L1000.5 300.0" fill="none" stroke="#17121d" stroke-width="1.1" stroke-linejoin="round" stroke-linecap="round" />
<circle cx="979.5" cy="281.2" r="5.3" fill="#655b6d" stroke="#17121d" stroke-width="1.2"/>
<circle cx="979.5" cy="281.2" r="2.6" fill="#83758e" stroke="#2a2234" stroke-width="1.0"/>
<circle cx="980.1" cy="293.3" r="5.3" fill="#655b6d" stroke="#17121d" stroke-width="1.2"/>
<circle cx="980.1" cy="293.3" r="2.6" fill="#83758e" stroke="#2a2234" stroke-width="1.0"/>
<path d="M1002.5 248 L1014 247.5 Q1017 248 1017.5 252 L1018.5 264 L1012 266 L1011 252 L1005.5 252 L1006.5 268 L1003 270Z" fill="#b2a3bd" stroke="#17121d" stroke-width="1.1"/>
<rect x="1006" y="251.5" width="5.6" height="13.5" fill="#ffffff" stroke="#17121d" stroke-width="0.7"/>
<path d="M999.9 274.1 L1027.4 262.6 L1024.2 266.5 L1001.2 279.2Z" fill="#2a2234" stroke="#17121d" stroke-width="1" stroke-linejoin="round" />
<path d="M1003.7 292.0 L1027.4 283.7 L1024.2 288.2 L1005.0 297.1Z" fill="#2a2234" stroke="#17121d" stroke-width="1" stroke-linejoin="round" />
<path d="M1001.0 279.5L1022.0 269.0" stroke="#17121d" stroke-width="0.9" fill="none" />
<path d="M1005.0 297.5L1022.0 290.5" stroke="#17121d" stroke-width="0.9" fill="none" />
<path d="M996.0 222.0 L1003.0 231.0 L1002.0 236.0 L995.0 233.0Z" fill="#b7a8c2" stroke="#17121d" stroke-width="1" stroke-linejoin="round" />
<circle cx="1000.0" cy="231.0" r="1.5" fill="#2a2234" stroke="#17121d" stroke-width="0.5"/>
<path d="M672.0 324.0 L694.0 321.5" fill="none" stroke="#17121d" stroke-width="2.6" stroke-linejoin="round" stroke-linecap="round" />
<path d="M672.0 324.0 L680.5 335.6" fill="none" stroke="#17121d" stroke-width="2.6" stroke-linejoin="round" stroke-linecap="round" />
<path d="M694.0 321.5 L700.0 338.0" fill="none" stroke="#17121d" stroke-width="2.2" stroke-linejoin="round" stroke-linecap="round" />
<path d="M680.5 335.6 L667.8 347.0" fill="none" stroke="#17121d" stroke-width="2.4" stroke-linejoin="round" stroke-linecap="round" />
<path d="M753.0 306.0 L777.0 329.0" fill="none" stroke="#17121d" stroke-width="2.4" stroke-linejoin="round" stroke-linecap="round" />
<path d="M752.0 319.0 L777.0 329.0" fill="none" stroke="#17121d" stroke-width="2.2" stroke-linejoin="round" stroke-linecap="round" />
<path d="M757.0 345.0 L777.0 329.0" fill="none" stroke="#17121d" stroke-width="2.2" stroke-linejoin="round" stroke-linecap="round" />
<path d="M777.0 329.0 L800.0 318.0" fill="none" stroke="#17121d" stroke-width="2.4" stroke-linejoin="round" stroke-linecap="round" />
<path d="M752.1 305.6 L736.0 310.0" fill="none" stroke="#17121d" stroke-width="2.0" stroke-linejoin="round" stroke-linecap="round" />
<circle cx="672.2" cy="324.1" r="7" fill="#9f8faa" stroke="#17121d" stroke-width="2.6"/>
<circle cx="672.2" cy="324.1" r="3.15" fill="#433c49" stroke="#17121d" stroke-width="0.8"/>
<circle cx="694.0" cy="321.6" r="4.6" fill="#b3a4be" stroke="#17121d" stroke-width="1.4"/>
<circle cx="694.0" cy="321.6" r="2.07" fill="#433c49" stroke="#17121d" stroke-width="0.8"/>
<circle cx="680.5" cy="335.6" r="3.8" fill="#38313d" stroke="#17121d" stroke-width="1.6"/>
<circle cx="680.5" cy="335.6" r="1.71" fill="#433c49" stroke="#17121d" stroke-width="0.8"/>
<circle cx="752.1" cy="305.6" r="4.6" fill="#b3a4be" stroke="#17121d" stroke-width="1.4"/>
<circle cx="752.1" cy="305.6" r="2.07" fill="#433c49" stroke="#17121d" stroke-width="0.8"/>
<circle cx="777.1" cy="329.2" r="5.6" fill="#b3a4be" stroke="#17121d" stroke-width="2.0"/>
<circle cx="777.1" cy="329.2" r="2.52" fill="#433c49" stroke="#17121d" stroke-width="0.8"/>
<circle cx="743.0" cy="325.0" r="2.2" fill="#91829d" stroke="#17121d" stroke-width="1.2"/>
<circle cx="667.8" cy="347.1" r="7.6" fill="#d1c4dc" stroke="#17121d" stroke-width="1.6"/>
<path d="M656.0 358.0L664.0 352.0" stroke="#17121d" stroke-width="2" fill="none" />
<path d="M648.0 356.0L676.0 344.0" stroke="#17121d" stroke-width="1.2" fill="none" />
<path d="M650.0 372.0L690.0 355.0" stroke="#17121d" stroke-width="1.2" fill="none" />
<path d="M693.0 342.0 L706.0 339.0 L710.0 357.0 L697.0 360.0Z" fill="#bdaec8" stroke="#17121d" stroke-width="1.3" stroke-linejoin="round" />
<path d="M697.0 344.0L701.0 358.0" stroke="#17121d" stroke-width="0.8" fill="none" />
<path d="M677 372 Q678 358 692 354 L696 366 Q688 368 684 376Z" fill="#f0e7f7" stroke="#433c49" stroke-width="0.8"/>
<path d="M644 350 Q668 345 688 358 Q704 372 706 390" stroke="#17121d" stroke-width="1.2" fill="none"/>
<path d="M650 375 Q676 366 690 384 Q700 398 712 420" stroke="#17121d" stroke-width="1.0" fill="none"/>
<path d="M700.0 361.0L706.0 367.0" stroke="#17121d" stroke-width="3.2" fill="none" />
<path d="M700.0 378.0L706.0 384.0" stroke="#17121d" stroke-width="3.2" fill="none" />
<circle cx="694.6" cy="376.5" r="5.6" fill="#cdbfd8" stroke="#17121d" stroke-width="1.3"/>
<circle cx="694.6" cy="376.5" r="2.52" fill="#433c49" stroke="#17121d" stroke-width="0.8"/>
<circle cx="708.7" cy="388.0" r="7.6" fill="#d0c2db" stroke="#17121d" stroke-width="1.2"/>
<path d="M712.0 383.0L717.0 383.0" stroke="#17121d" stroke-width="1.2" fill="none" />
<path d="M710.6 386.9L714.4 390.1" stroke="#17121d" stroke-width="1.2" fill="none" />
<path d="M707.0 388.9L707.9 393.8" stroke="#17121d" stroke-width="1.2" fill="none" />
<path d="M703.0 388.2L700.5 392.5" stroke="#17121d" stroke-width="1.2" fill="none" />
<path d="M700.4 385.1L695.7 386.8" stroke="#17121d" stroke-width="1.2" fill="none" />
<path d="M700.4 380.9L695.7 379.2" stroke="#17121d" stroke-width="1.2" fill="none" />
<path d="M703.0 377.8L700.5 373.5" stroke="#17121d" stroke-width="1.2" fill="none" />
<path d="M707.0 377.1L707.9 372.2" stroke="#17121d" stroke-width="1.2" fill="none" />
<path d="M710.6 379.1L714.4 375.9" stroke="#17121d" stroke-width="1.2" fill="none" />
<path d="M712.0 366.0 L735.0 362.0 L748.0 352.0" fill="none" stroke="#17121d" stroke-width="1.2" stroke-linejoin="round" stroke-linecap="round" />
<path d="M716.0 372.0 L742.0 371.0" fill="none" stroke="#17121d" stroke-width="1.2" stroke-linejoin="round" stroke-linecap="round" />
<path d="M725.0 380.0 L742.0 378.0" fill="none" stroke="#17121d" stroke-width="3" stroke-linejoin="round" stroke-linecap="round" />
<circle cx="747.0" cy="374.0" r="4.6" fill="#b3a4be" stroke="#17121d" stroke-width="1.6"/>
<circle cx="747.0" cy="374.0" r="2.07" fill="#433c49" stroke="#17121d" stroke-width="0.8"/>
<path d="M740.0 366.0 L746.0 364.0 L748.0 369.0 L742.0 371.0Z" fill="#38313d" stroke="#17121d" stroke-width="0.8" stroke-linejoin="round" />
<path d="M767 355 Q772 350 780 353 L794 357 Q798 360 794 364 L782 370 Q772 370 768 364Z" fill="#1f1a27" stroke="#17121d" stroke-width="1"/>
<circle cx="789.0" cy="360.5" r="2.6" fill="#9f8faa" stroke="#17121d" stroke-width="0.8"/>
<circle cx="781.0" cy="365.0" r="1.8" fill="#9f8faa" stroke="#17121d" stroke-width="0.6"/>
<circle cx="759.0" cy="342.0" r="4.2" fill="#c4b6cf" stroke="#17121d" stroke-width="1.4"/>
<circle cx="759.0" cy="342.0" r="1.8900000000000001" fill="#433c49" stroke="#17121d" stroke-width="0.8"/>
<path d="M753.0 338.0 L765.0 345.0 L760.0 360.0" fill="none" stroke="#17121d" stroke-width="1.0" stroke-linejoin="round" stroke-linecap="round" />
<path d="M770.0 340.0 L790.0 345.0 L806.0 340.0" fill="none" stroke="#17121d" stroke-width="1.0" stroke-linejoin="round" stroke-linecap="round" />
<path d="M643 343 L680 345 Q700 362 720 382 L735 405 L728 424 L715 423 Q690 416 662 401 L650 384Z" fill="#bbafc5" stroke="none"/>
<path d="M648 349 Q676 348 694 364 Q714 384 730 408" stroke="#635e67" stroke-width="1.1" fill="none"/>
<path d="M646 372 Q668 396 716 421" stroke="#635e67" stroke-width="1.1" fill="none"/>
<path d="M660 352 L700 410 M672 396 L684 380" stroke="#635e67" stroke-width="0.9" fill="none"/>
<path d="M651 400 Q672 410 694 418 L712 424" stroke="#17121d" stroke-width="1.2" fill="none"/>
<circle cx="660.5" cy="405.5" r="3.8" fill="#83758e" stroke="#17121d" stroke-width="1.4"/>
<circle cx="660.5" cy="405.5" r="1.71" fill="#433c49" stroke="#17121d" stroke-width="0.8"/>
<circle cx="671.0" cy="414.0" r="2.6" fill="#83758e" stroke="#17121d" stroke-width="1.0"/>
<circle cx="671.0" cy="414.0" r="1.1700000000000002" fill="#433c49" stroke="#17121d" stroke-width="0.8"/>
<path d="M803.0 382.0 L826.0 384.0 L826.0 452.0 L803.0 452.0Z" fill="#a192ad" stroke="none" stroke-width="1" stroke-linejoin="round" />
<path d="M831.0 312.0 L952.0 314.0 L952.0 338.0 L831.0 340.0Z" fill="#ad9fb9" stroke="none" stroke-width="1" stroke-linejoin="round" />
<path d="M831.0 314.0 L952.0 316.5 L952.0 322.0 L831.0 320.5Z" fill="#d7cae1" stroke="none" stroke-width="1" stroke-linejoin="round" />
<path d="M859.3 309.6 L959.0 312.8" fill="none" stroke="#17121d" stroke-width="2.0" stroke-linejoin="round" stroke-linecap="round" />
<path d="M831.0 314.5 L950.0 317.8" fill="none" stroke="#17121d" stroke-width="1.0" stroke-linejoin="round" stroke-linecap="round" />
<path d="M831.0 320.3 L950.0 322.8" fill="none" stroke="#17121d" stroke-width="1.0" stroke-linejoin="round" stroke-linecap="round" />
<path d="M831.1 326.0 L951.3 330.5" fill="none" stroke="#17121d" stroke-width="3.0" stroke-linejoin="round" stroke-linecap="round" />
<path d="M831.1 333.1 L951.3 336.9" fill="none" stroke="#17121d" stroke-width="3.0" stroke-linejoin="round" stroke-linecap="round" />
<path d="M951.3 322.0 L951.3 338.0" fill="none" stroke="#17121d" stroke-width="1.6" stroke-linejoin="round" stroke-linecap="round" />
<path d="M908.0 314.0L908.0 324.0" stroke="#17121d" stroke-width="1.2" fill="none" />
<path d="M916.0 314.5L916.0 325.0" stroke="#17121d" stroke-width="1.2" fill="none" />
<path d="M804.3 338.8 L804.3 318 Q806 308.5 816 308.5 L829.9 308.5 L829.9 338.8Z" fill="#a192ad" stroke="#17121d" stroke-width="1.3"/>
<path d="M807.5 321 Q808 312.5 816 312.5" stroke="#eee5f5" stroke-width="2" fill="none"/>
<path d="M804.3 320.3L829.9 320.3" stroke="#17121d" stroke-width="1.0" fill="none" />
<path d="M820.5 300.0L820.5 320.0" stroke="#17121d" stroke-width="2.0" fill="none" />
<path d="M826.5 308.0L826.5 338.0" stroke="#17121d" stroke-width="1.6" fill="none" />
<circle cx="797.0" cy="327.0" r="4.6" fill="#b3a4be" stroke="#17121d" stroke-width="1.8"/>
<circle cx="797.0" cy="327.0" r="2.07" fill="#433c49" stroke="#17121d" stroke-width="0.8"/>
<circle cx="826.5" cy="302.0" r="1.7" fill="#2a2234" stroke="#17121d" stroke-width="0.5"/>
<path d="M783.0 311.0 L787.0 309.0 L791.0 318.0 L787.0 320.0Z" fill="#ffffff" stroke="#17121d" stroke-width="0.6" stroke-linejoin="round" />
<path d="M793.0 316.0 L822.0 303.0" fill="none" stroke="#17121d" stroke-width="2.0" stroke-linejoin="round" stroke-linecap="round" />
<path d="M831.0 344.0 L952.0 347.0" fill="none" stroke="#17121d" stroke-width="1.2" stroke-linejoin="round" stroke-linecap="round" />
<path d="M831.0 350.0 L952.0 352.5" fill="none" stroke="#17121d" stroke-width="1.2" stroke-linejoin="round" stroke-linecap="round" />
<path d="M804.0 340.0 L806.0 350.0 L816.0 356.0 L952.0 358.0" fill="none" stroke="#17121d" stroke-width="1.2" stroke-linejoin="round" stroke-linecap="round" />
<path d="M845.0 342.5 L866.0 343.2" fill="none" stroke="#17121d" stroke-width="2.8" stroke-linejoin="round" stroke-linecap="round" />
<path d="M886.0 343.5 L898.0 344.0" fill="none" stroke="#17121d" stroke-width="2.4" stroke-linejoin="round" stroke-linecap="round" />
<path d="M845.0 350.0 L856.0 350.3" fill="none" stroke="#17121d" stroke-width="2.8" stroke-linejoin="round" stroke-linecap="round" />
<path d="M910.0 341.0L910.0 352.0" stroke="#17121d" stroke-width="1.2" fill="none" />
<path d="M918.0 341.0L918.0 352.0" stroke="#17121d" stroke-width="1.2" fill="none" />
<path d="M951.0 318.0 L966.0 326.0 L951.0 336.0Z" fill="#cabcd5" stroke="#17121d" stroke-width="1.0" stroke-linejoin="round" />
<path d="M957.0 312.6 L969.4 312.6 L969.4 345.9 L959.0 349.0 L955.0 340.0 L966.0 333.0 L966.0 320.0Z" fill="#b3a4be" stroke="#17121d" stroke-width="1.1" stroke-linejoin="round" />
<circle cx="820.3" cy="358.0" r="1.8" fill="#2a2234" stroke="#17121d" stroke-width="0.6"/>
<path d="M813 354 Q814 366 824 365" stroke="#17121d" stroke-width="1.2" fill="none"/>
<path d="M813.0 349.0L813.0 360.0" stroke="#17121d" stroke-width="3.0" fill="none" />
<path d="M856 372 Q868 364 880 372 L886 386 L852 388Z" fill="#d0c2db" stroke="#17121d" stroke-width="1.2"/>
<path d="M863.0 372.0L864.0 386.0" stroke="#17121d" stroke-width="1.0" fill="none" />
<path d="M869.0 372.0L870.0 386.0" stroke="#17121d" stroke-width="1.0" fill="none" />
<path d="M875.0 372.0L876.0 386.0" stroke="#17121d" stroke-width="1.0" fill="none" />
<circle cx="888.5" cy="378.5" r="2" fill="#83758e" stroke="#17121d" stroke-width="0.8"/>
<path d="M838.0 382.0 L960.0 380.0" fill="none" stroke="#17121d" stroke-width="1.0" stroke-linejoin="round" stroke-linecap="round" />
<path d="M830.0 388.0 L852.0 388.0" fill="none" stroke="#17121d" stroke-width="1.2" stroke-linejoin="round" stroke-linecap="round" />
<path d="M926.0 356.0 L912.0 386.0" fill="none" stroke="#17121d" stroke-width="1.2" stroke-linejoin="round" stroke-linecap="round" />
<path d="M932.0 356.0 L918.0 386.0" fill="none" stroke="#17121d" stroke-width="1.2" stroke-linejoin="round" stroke-linecap="round" />
<path d="M918.0 380.0 L952.0 396.0" fill="none" stroke="#17121d" stroke-width="2.4" stroke-linejoin="round" stroke-linecap="round" />
<path d="M847.0 376.0L848.0 392.0" stroke="#17121d" stroke-width="3.0" fill="none" />
<path d="M897.0 376.0L897.0 392.0" stroke="#17121d" stroke-width="3.0" fill="none" />
<path d="M950.0 372.0 L953.0 371.0 L956.0 383.0 L951.0 384.0Z" fill="#dacee4" stroke="#17121d" stroke-width="0.8" stroke-linejoin="round" />
<path d="M960.0 366.0 L963.0 365.0 L966.0 373.0 L962.0 374.0Z" fill="#d7cae1" stroke="#17121d" stroke-width="0.8" stroke-linejoin="round" />
<path d="M741 383 L786 380 Q792 380 797 386 L803 404 L803 428 Q803 436 795 437 L745 441 Q733 441 731 430 L730 396 Q731 384 741 383Z" fill="#b0a1bc" stroke="#17121d" stroke-width="1.3"/>
<path d="M747 389.5 L782 387.5 Q788 388 791 393 L795.5 406 L795.5 425 Q795 430 790 430.5 L748 433 Q740 433 739 426 L738.5 398 Q739 390 747 389.5Z" fill="#81748c" stroke="#17121d" stroke-width="1.6"/>
<path d="M746.0 390.0 L768.0 389.0 L766.0 412.0 L741.0 414.0Z" fill="#6c6274" stroke="none" stroke-width="1" stroke-linejoin="round" />
<path d="M742 414 L766 412 L794 420 M766 412 L780 392 M745 432 L764 414 M756 432 Q774 418 794 427" stroke="#17121d" stroke-width="0.9" fill="none"/>
<path d="M712.0 427.0 L731.0 434.0 L745.0 441.0 L770.0 441.0 L768.0 463.0 L761.0 492.0 L717.0 488.5 L710.5 487.0 L710.0 463.0 L713.0 448.0Z" fill="#9788a3" stroke="none" stroke-width="1" stroke-linejoin="round" />
<path d="M712.0 440.0 L722.0 437.0 L728.0 444.0" fill="none" stroke="#17121d" stroke-width="1.6" stroke-linejoin="round" stroke-linecap="round" />
<circle cx="717.0" cy="431.5" r="3" fill="#b3a4be" stroke="#17121d" stroke-width="1.2"/>
<circle cx="717.0" cy="431.5" r="1.35" fill="#433c49" stroke="#17121d" stroke-width="0.8"/>
<circle cx="725.0" cy="435.0" r="3.4" fill="#cabcd5" stroke="#17121d" stroke-width="1.2"/>
<circle cx="725.0" cy="435.0" r="1.53" fill="#433c49" stroke="#17121d" stroke-width="0.8"/>
<path d="M711.0 456.0 L724.0 452.0 L726.0 462.0" fill="none" stroke="#17121d" stroke-width="1.6" stroke-linejoin="round" stroke-linecap="round" />
<path d="M711.0 466.0 L724.0 463.0 L727.0 488.0 L711.5 487.0Z" fill="#83758e" stroke="#17121d" stroke-width="1.6" stroke-linejoin="round" />
<circle cx="716.5" cy="480.5" r="3.4" fill="#544b5c" stroke="#17121d" stroke-width="1.4"/>
<circle cx="716.5" cy="480.5" r="1.53" fill="#433c49" stroke="#17121d" stroke-width="0.8"/>
<path d="M727.0 465.0 L762.0 473.0" fill="none" stroke="#17121d" stroke-width="1.0" stroke-linejoin="round" stroke-linecap="round" />
<path d="M727.0 488.0 L760.0 492.0" fill="none" stroke="#17121d" stroke-width="1.6" stroke-linejoin="round" stroke-linecap="round" />
<path d="M768.0 455.0 L760.0 492.0" fill="none" stroke="#17121d" stroke-width="2.4" stroke-linejoin="round" stroke-linecap="round" stroke-dasharray="1.4 1"/>
<path d="M772.0 456.0 L765.0 480.0 L754.0 494.0" fill="none" stroke="#17121d" stroke-width="1.0" stroke-linejoin="round" stroke-linecap="round" />
<path d="M769 474 Q775 466 786 463 L794 464" stroke="#17121d" stroke-width="1.6" fill="none"/>
<path d="M721.5 490.0 L734.0 514.0" fill="none" stroke="#17121d" stroke-width="1.0" stroke-linejoin="round" stroke-linecap="round" />
<path d="M722.0 501.0 L733.0 497.0 L738.0 503.0" fill="none" stroke="#17121d" stroke-width="1.0" stroke-linejoin="round" stroke-linecap="round" />
<path d="M738.5 492.0 L753.0 494.5 L753.5 501.0 L745.5 506.5 L738.5 503.5Z" fill="#8f7f9b" stroke="#17121d" stroke-width="1.2" stroke-linejoin="round" />
<circle cx="746.0" cy="500.0" r="1.9" fill="#2a2234" stroke="#17121d" stroke-width="0.6"/>
<path d="M731.0 491.0 L733.0 506.0" fill="none" stroke="#17121d" stroke-width="1.6" stroke-linejoin="round" stroke-linecap="round" />
<path d="M790.0 448.0 L808.0 446.0 L808.0 455.0" fill="none" stroke="#17121d" stroke-width="1.2" stroke-linejoin="round" stroke-linecap="round" />
<path d="M777.0 458.0 L797.0 455.0" fill="none" stroke="#17121d" stroke-width="1.2" stroke-linejoin="round" stroke-linecap="round" />
<path d="M808.0 426.0 L832.0 424.0 L834.0 456.0 L810.0 459.0Z" fill="#b3a4be" stroke="#17121d" stroke-width="1.2" stroke-linejoin="round" />
<path d="M815 418 L815 408 L825 407 L826 418 M812 418 L830 417 L830 424 L813 425Z" fill="#d0c2db" stroke="#17121d" stroke-width="1.1"/>
<path d="M819.5 448.0L819.5 456.0" stroke="#17121d" stroke-width="2.4" fill="none" />
<path d="M812.0 438.0 L832.0 436.0" fill="none" stroke="#17121d" stroke-width="2.2" stroke-linejoin="round" stroke-linecap="round" />
<path d="M851.8 387.7 L828.8 435.0" fill="none" stroke="#17121d" stroke-width="2.8" stroke-linejoin="round" stroke-linecap="round" />
<path d="M841.6 417.1 L905.5 419.6" fill="none" stroke="#17121d" stroke-width="2.4" stroke-linejoin="round" stroke-linecap="round" />
<path d="M832.0 436.0 L870.0 440.0 L905.0 443.0" fill="none" stroke="#17121d" stroke-width="1.2" stroke-linejoin="round" stroke-linecap="round" />
<path d="M828.0 446.0 L880.0 449.0" fill="none" stroke="#17121d" stroke-width="1.0" stroke-linejoin="round" stroke-linecap="round" />
<path d="M830.0 438.0 L905.0 444.0 L905.0 452.0 L832.0 455.0Z" fill="url(#gV)" stroke="none" stroke-width="1" stroke-linejoin="round" />
<path d="M868.0 392.0 L868.0 418.0" fill="none" stroke="#17121d" stroke-width="2.6" stroke-linejoin="round" stroke-linecap="round" />
<path d="M868.0 420.0 L874.0 452.0" fill="none" stroke="#17121d" stroke-width="2.0" stroke-linejoin="round" stroke-linecap="round" />
<circle cx="846.7" cy="429.9" r="4.8" fill="#655b6d" stroke="#17121d" stroke-width="1.2"/>
<circle cx="846.7" cy="429.9" r="2.16" fill="#433c49" stroke="#17121d" stroke-width="0.8"/>
<circle cx="858.2" cy="428.6" r="4.8" fill="#81748c" stroke="#17121d" stroke-width="1.2"/>
<circle cx="858.2" cy="428.6" r="2.16" fill="#433c49" stroke="#17121d" stroke-width="0.8"/>
<path d="M873 430 L884 428 M876 424 L876 436" stroke="#17121d" stroke-width="1.6" fill="none"/>
<path d="M888.5 422.0L889.0 436.0" stroke="#17121d" stroke-width="2.2" fill="none" stroke-dasharray="2 1"/>
<path d="M845.0 430.0 L843.0 444.0" fill="none" stroke="#17121d" stroke-width="1.2" stroke-linejoin="round" stroke-linecap="round" />
<path d="M836.0 453.0 L838.0 458.0" fill="none" stroke="#17121d" stroke-width="1.6" stroke-linejoin="round" stroke-linecap="round" />
<path d="M826.0 450.0 L842.0 449.0" fill="none" stroke="#17121d" stroke-width="2.2" stroke-linejoin="round" stroke-linecap="round" />
<circle cx="844.5" cy="454.5" r="2" fill="#2a2234" stroke="#17121d" stroke-width="0.8"/>
<circle cx="844.5" cy="454.5" r="0.9" fill="#433c49" stroke="#17121d" stroke-width="0.8"/>
<path d="M882.0 452.0 L901.0 452.0 L900.0 462.0 L891.5 466.0 L883.0 463.0Z" fill="#83758e" stroke="#17121d" stroke-width="1.6" stroke-linejoin="round" />
<circle cx="891.5" cy="461.0" r="1.8" fill="#2a2234" stroke="#17121d" stroke-width="0.6"/>
<path d="M904.5 453 L904.5 458 Q909.5 464 914.5 458 L914.5 453Z" fill="#655b6d" stroke="#17121d" stroke-width="1.4"/>
<path d="M915.5 453 L915.5 458 Q920.5 464 925.5 458 L925.5 453Z" fill="#655b6d" stroke="#17121d" stroke-width="1.4"/>
<path d="M892 404 Q898 398 906 402 L910 410 Q908 419 900 420 Q892 418 892 404Z" fill="#1f1a27" stroke="#17121d" stroke-width="1"/>
<path d="M899.0 384.0 L899.0 402.0" fill="none" stroke="#17121d" stroke-width="1.8" stroke-linejoin="round" stroke-linecap="round" />
<path d="M905.0 410.0 L940.0 448.0" fill="none" stroke="#17121d" stroke-width="2.6" stroke-linejoin="round" stroke-linecap="round" />
<path d="M905.0 420.0 L925.0 412.0 L935.0 398.0" fill="none" stroke="#17121d" stroke-width="1.6" stroke-linejoin="round" stroke-linecap="round" />
<path d="M905 388 Q918 392 922 408 Q920 420 908 424" stroke="#17121d" stroke-width="1.2" fill="none"/>
<path d="M927.8 452 L928.8 476 Q934 484 936 484 Q939 483 942.3 475 L942.3 452Z" fill="#83758e" stroke="#17121d" stroke-width="1.5"/>
<path d="M934.3 456.0L936.4 473.0" stroke="#d02a20" stroke-width="1.6" fill="none" />
<path d="M945.5 410.0 L946.0 440.0" fill="none" stroke="#17121d" stroke-width="2.0" stroke-linejoin="round" stroke-linecap="round" />
<path d="M945.5 408.0 L948.0 408.0" fill="none" stroke="#dacee4" stroke-width="3.5" stroke-linejoin="round" stroke-linecap="round" />
<path d="M969.4 312.6 L969.4 345.9" fill="none" stroke="#17121d" stroke-width="1.2" stroke-linejoin="round" stroke-linecap="round" />
<path d="M975 318 L975 300 M981 296 L981 318 Q983 328 992 330" stroke="#17121d" stroke-width="1.2" fill="none"/>
<path d="M975.0 300.0 L981.0 298.0 L982.0 318.0 L986.0 326.0 L992.0 329.0 L988.0 334.0 L978.0 328.0 L975.0 318.0Z" fill="#8b7b97" stroke="#17121d" stroke-width="1.1" stroke-linejoin="round" />
<path d="M992.0 296.0 L1002.0 300.0 L1006.0 306.0 L999.0 312.0Z" fill="#cabcd5" stroke="#17121d" stroke-width="1.0" stroke-linejoin="round" />
<path d="M974.5 302 Q972.5 308 974.5 314 M976 308 L986 306.5" stroke="#17121d" stroke-width="2" fill="none"/>
<path d="M989.5 300.0L989.5 314.0" stroke="#17121d" stroke-width="2" fill="none" stroke-dasharray="1.5 1"/>
<path d="M978.0 320.0L978.0 335.0" stroke="#2a2234" stroke-width="2.4" fill="none" stroke-dasharray="1.2 1"/>
<path d="M982.5 317.0L982.5 336.0" stroke="#2a2234" stroke-width="2.0" fill="none" stroke-dasharray="1.2 1"/>
<path d="M1012.9 328.0 L1042.3 328.0 L1042.3 345.2 L1012.9 345.2Z" fill="#9889a4" stroke="#17121d" stroke-width="1.1" stroke-linejoin="round" />
<path d="M1028.0 316.5 L1037.0 317.0 L1044.5 326.0 L1044.5 340.0" fill="none" stroke="#17121d" stroke-width="1.3" stroke-linejoin="round" stroke-linecap="round" />
<path d="M1030 324 Q1036 321 1040 327" stroke="#17121d" stroke-width="1" fill="none"/>
<path d="M1039.5 329.0L1039.5 345.0" stroke="#17121d" stroke-width="1.0" fill="none" />
<path d="M1006.5 322.0 L1013.0 320.0 L1044.0 372.0 L1038.0 376.5Z" fill="#b0a1bc" stroke="#17121d" stroke-width="1.2" stroke-linejoin="round" />
<path d="M1012.2 331.8L1018.5 328.6" stroke="#17121d" stroke-width="0.9" fill="none" />
<path d="M1019.7 344.9L1026.0 341.7" stroke="#17121d" stroke-width="0.9" fill="none" />
<path d="M1023.8 352.0L1030.1 348.8" stroke="#17121d" stroke-width="0.9" fill="none" />
<path d="M1027.9 359.1L1034.2 355.9" stroke="#17121d" stroke-width="0.9" fill="none" />
<path d="M1033.3 368.3L1039.6 365.1" stroke="#17121d" stroke-width="0.9" fill="none" />
<path d="M1044 339 Q1054 338 1053.5 346 Q1052 356 1040 357" stroke="#17121d" stroke-width="1.2" fill="none"/>
<path d="M1044 343.5 Q1049.5 343 1049 347.5 Q1047 352.5 1038 353.5" stroke="#17121d" stroke-width="1.2" fill="none"/>
<path d="M1041.0 361.0 L1050.0 357.5 L1055.0 367.5 L1044.0 372.5Z" fill="#8c7c98" stroke="#17121d" stroke-width="1.2" stroke-linejoin="round" />
<path d="M959.2 349.7 L972 361 Q975 363.8 980 363.8 L1029.5 363.8 L1031 368 L980 369 Q973 369 969 365 L957 354Z" fill="#bfb1c9" stroke="#17121d" stroke-width="1.1"/>
<path d="M957 356 L969 367.5 Q973 371.2 980 371.2 L1033 370" stroke="#17121d" stroke-width="1.0" fill="none"/>
<path d="M980.0 369.0 L987.0 369.0 L987.0 373.0 L980.0 373.0Z" fill="#e6daf0" stroke="#17121d" stroke-width="0.8" stroke-linejoin="round" />
<path d="M1000.0 369.0L1000.0 373.0" stroke="#17121d" stroke-width="0.8" fill="none" />
<path d="M1012.0 369.0L1012.0 373.0" stroke="#17121d" stroke-width="0.8" fill="none" />
<path d="M940.0 360.0 L975.0 364.0 L990.0 392.0 L940.0 392.0Z" fill="#857790" stroke="none" stroke-width="1" stroke-linejoin="round" />
<path d="M1000.0 372.0 L1038.0 376.0 L1052.0 392.0 L1010.0 392.0Z" fill="#9a8ba5" stroke="none" stroke-width="1" stroke-linejoin="round" />
<path d="M1038.0 376.0 L1053.0 391.5" fill="none" stroke="#17121d" stroke-width="1.3" stroke-linejoin="round" stroke-linecap="round" />
<path d="M1032.0 372.0 L1046.0 392.0" fill="none" stroke="#17121d" stroke-width="0.9" stroke-linejoin="round" stroke-linecap="round" />
<circle cx="1022.7" cy="384.0" r="1.9" fill="#2a2234" stroke="#17121d" stroke-width="0.6"/>
<path d="M978 376 Q980 388 992 390 Q1004 392 1010 384" stroke="#17121d" stroke-width="1.2" fill="none"/>
<path d="M1005.0 384.0 L1014.0 386.0 L1011.0 394.0 L1002.0 392.0Z" fill="#b8aac3" stroke="#17121d" stroke-width="1.2" stroke-linejoin="round" />
<path d="M975.0 386.0 L958.0 396.0" fill="none" stroke="#17121d" stroke-width="1.0" stroke-linejoin="round" stroke-linecap="round" />
<path d="M986.0 390.0 L975.0 400.0" fill="none" stroke="#17121d" stroke-width="1.0" stroke-linejoin="round" stroke-linecap="round" />
<path d="M940.0 394.6 L1000.0 394.0 L1048.3 393.5" fill="none" stroke="#17121d" stroke-width="3.0" stroke-linejoin="round" stroke-linecap="round" />
<path d="M940.0 405.2 L1045.5 404.4" fill="none" stroke="#17121d" stroke-width="2.6" stroke-linejoin="round" stroke-linecap="round" />
<path d="M941.5 404.5 L947.7 395.0 L953.9 404.5" fill="none" stroke="#17121d" stroke-width="1.8" stroke-linejoin="round" stroke-linecap="round" />
<path d="M953.9 404.5 L960.1 395.0 L966.3 404.5" fill="none" stroke="#17121d" stroke-width="1.8" stroke-linejoin="round" stroke-linecap="round" />
<path d="M966.3 404.5 L972.5 395.0 L978.7 404.5" fill="none" stroke="#17121d" stroke-width="1.8" stroke-linejoin="round" stroke-linecap="round" />
<path d="M978.7 404.5 L984.9 395.0 L991.1 404.5" fill="none" stroke="#17121d" stroke-width="1.8" stroke-linejoin="round" stroke-linecap="round" />
<path d="M991.1 404.5 L997.3 395.0 L1003.5 404.5" fill="none" stroke="#17121d" stroke-width="1.8" stroke-linejoin="round" stroke-linecap="round" />
<path d="M1003.5 404.5 L1009.7 395.0 L1015.9 404.5" fill="none" stroke="#17121d" stroke-width="1.8" stroke-linejoin="round" stroke-linecap="round" />
<path d="M1015.9 404.5 L1022.1 395.0 L1028.3 404.5" fill="none" stroke="#17121d" stroke-width="1.8" stroke-linejoin="round" stroke-linecap="round" />
<path d="M1028.3 404.5 L1034.5 395.0 L1040.7 404.5" fill="none" stroke="#17121d" stroke-width="1.8" stroke-linejoin="round" stroke-linecap="round" />
<path d="M918.0 380.0 L952.0 396.0" fill="none" stroke="#17121d" stroke-width="2.4" stroke-linejoin="round" stroke-linecap="round" />
<path d="M1048 394 Q1068 404 1077 422 Q1082 438 1074 456 L1068 470" stroke="#17121d" stroke-width="2.6" fill="none"/>
<path d="M1040 405.7 Q1058 416 1063 430 Q1066 444 1058 462 L1054 470" stroke="#17121d" stroke-width="2.4" fill="none"/>
<path d="M1050.0 400.0L1056.0 414.0" stroke="#17121d" stroke-width="1.8" fill="none" />
<path d="M1056.0 414.0L1066.0 406.0" stroke="#17121d" stroke-width="1.8" fill="none" />
<path d="M1066.0 406.0L1063.0 425.0" stroke="#17121d" stroke-width="1.8" fill="none" />
<path d="M1063.0 425.0L1076.0 420.0" stroke="#17121d" stroke-width="1.8" fill="none" />
<path d="M1076.0 420.0L1065.0 436.0" stroke="#17121d" stroke-width="1.8" fill="none" />
<path d="M1065.0 436.0L1079.0 438.0" stroke="#17121d" stroke-width="1.8" fill="none" />
<path d="M1079.0 438.0L1063.0 449.0" stroke="#17121d" stroke-width="1.8" fill="none" />
<path d="M1063.0 449.0L1075.0 455.0" stroke="#17121d" stroke-width="1.8" fill="none" />
<path d="M1075.0 455.0L1058.0 462.0" stroke="#17121d" stroke-width="1.8" fill="none" />
<path d="M1053.7 392.2 Q1082 398 1098 424 Q1110 446 1113.2 466" stroke="#17121d" stroke-width="1.2" fill="none"/>
<path d="M1097 428 Q1106 446 1109 470" stroke="#17121d" stroke-width="1" fill="none"/>
<path d="M1091.0 402.0 L1094.0 405.0 L1092.0 408.0" fill="none" stroke="#17121d" stroke-width="1.6" stroke-linejoin="round" stroke-linecap="round" />
<path d="M1089.0 409.0 L1094.0 410.0" fill="none" stroke="#17121d" stroke-width="1.4" stroke-linejoin="round" stroke-linecap="round" />
<path d="M1088.0 418.0 L1092.0 416.5 L1095.0 425.0 L1091.0 426.5Z" fill="#9c8da8" stroke="#17121d" stroke-width="1.0" stroke-linejoin="round" />
<path d="M1089.0 441.0 L1093.0 439.0 L1096.0 445.0 L1092.0 448.0Z" fill="#9c8da8" stroke="#17121d" stroke-width="1.0" stroke-linejoin="round" />
<circle cx="1103.7" cy="430.0" r="4.8" fill="#9f8faa" stroke="#17121d" stroke-width="1.5"/>
<circle cx="1103.7" cy="430.0" r="2.16" fill="#433c49" stroke="#17121d" stroke-width="0.8"/>
<circle cx="1094.9" cy="459.2" r="6.6" fill="#9f8faa" stroke="#17121d" stroke-width="1.6"/>
<circle cx="1094.9" cy="459.2" r="2.9699999999999998" fill="#433c49" stroke="#17121d" stroke-width="0.8"/>
<circle cx="1055.7" cy="432.8" r="6.2" fill="#83758e" stroke="#17121d" stroke-width="3.0"/>
<circle cx="1055.7" cy="432.8" r="2.79" fill="#433c49" stroke="#17121d" stroke-width="0.8"/>
<circle cx="1061.8" cy="474.0" r="6" fill="#b3a4be" stroke="#17121d" stroke-width="1.8"/>
<circle cx="1061.8" cy="474.0" r="2.7" fill="#433c49" stroke="#17121d" stroke-width="0.8"/>
<circle cx="1061.8" cy="474.0" r="9" fill="none" stroke="#17121d" stroke-width="2.0"/>
<circle cx="1067.0" cy="462.0" r="2.8" fill="#b3a4be" stroke="#17121d" stroke-width="1.2"/>
<circle cx="1067.0" cy="462.0" r="1.26" fill="#433c49" stroke="#17121d" stroke-width="0.8"/>
<circle cx="1071.0" cy="445.5" r="2.6" fill="#83758e" stroke="#17121d" stroke-width="1.4"/>
<circle cx="1071.0" cy="445.5" r="1.1700000000000002" fill="#433c49" stroke="#17121d" stroke-width="0.8"/>
<path d="M1073 444 L1084 450 Q1087 453 1084 455 L1078 456" stroke="#17121d" stroke-width="2" fill="none"/>
<path d="M1055.7 439.0 L1045.0 486.0" fill="none" stroke="#17121d" stroke-width="2.0" stroke-linejoin="round" stroke-linecap="round" />
<path d="M1068.0 470.0 L1090.0 463.0" fill="none" stroke="#17121d" stroke-width="2.0" stroke-linejoin="round" stroke-linecap="round" />
<path d="M1072.0 476.0 L1088.0 468.0" fill="none" stroke="#17121d" stroke-width="1.6" stroke-linejoin="round" stroke-linecap="round" stroke-dasharray="1.4 1"/>
<path d="M1076.0 478.0 L1098.0 470.0 L1112.0 466.0" fill="none" stroke="#17121d" stroke-width="1.0" stroke-linejoin="round" stroke-linecap="round" />
<path d="M1104.0 466.0 L1107.0 490.0" fill="none" stroke="#17121d" stroke-width="0.9" stroke-linejoin="round" stroke-linecap="round" />
<path d="M1076.0 480.0 L1113.0 474.0" fill="none" stroke="#17121d" stroke-width="0.9" stroke-linejoin="round" stroke-linecap="round" />
<path d="M1069.0 478.0 L1113.5 473.0 L1121.0 475.0 L1122.0 489.5 L1069.0 497.0Z" fill="url(#gH)" stroke="#17121d" stroke-width="1.2" stroke-linejoin="round" />
<path d="M1069.0 501.5 L1113.5 492.5 L1113.5 499.0 L1079.5 510.0Z" fill="#83758e" stroke="#17121d" stroke-width="1.2" stroke-linejoin="round" />
<path d="M1072.0 499.0L1112.0 491.5" stroke="#f1ebf7" stroke-width="0.9" fill="none" />
<circle cx="1083.0" cy="499.5" r="1.5" fill="#2a2234" stroke="#17121d" stroke-width="0.5"/>
<path d="M995.0 497.0 L1003.5 493.0 L1058.5 487.0 L1059.5 503.5 L997.5 511.0Z" fill="url(#gH)" stroke="#17121d" stroke-width="1.2" stroke-linejoin="round" />
<path d="M1006.0 510.0 L1051.0 504.5 L1051.0 513.0 L1018.5 524.5 L1007.0 517.0Z" fill="#83758e" stroke="#17121d" stroke-width="1.2" stroke-linejoin="round" />
<path d="M1008.0 509.0L1050.0 503.5" stroke="#f1ebf7" stroke-width="0.9" fill="none" />
<circle cx="1019.0" cy="513.5" r="1.5" fill="#2a2234" stroke="#17121d" stroke-width="0.5"/>
<path d="M1012.0 495.5L1013.0 509.0" stroke="#17121d" stroke-width="0.9" fill="none" />
<path d="M1042.0 491.0L1042.0 504.0" stroke="#17121d" stroke-width="0.9" fill="none" />
<path d="M1040.0 487.0 L1058.0 484.0 L1068.0 478.0" fill="none" stroke="#17121d" stroke-width="1.8" stroke-linejoin="round" stroke-linecap="round" />
<path d="M1003.0 404.0 L1000.0 425.0" fill="none" stroke="#17121d" stroke-width="1.6" stroke-linejoin="round" stroke-linecap="round" />
<path d="M1000.0 425.0 L975.0 437.0" fill="none" stroke="#17121d" stroke-width="1.6" stroke-linejoin="round" stroke-linecap="round" />
<path d="M1000.0 425.0 L1028.0 415.0 L1040.0 406.0" fill="none" stroke="#17121d" stroke-width="1.6" stroke-linejoin="round" stroke-linecap="round" />
<path d="M1016.0 404.5 L1022.0 420.0" fill="none" stroke="#17121d" stroke-width="1.6" stroke-linejoin="round" stroke-linecap="round" />
<path d="M1028.0 404.5 L1020.0 416.0" fill="none" stroke="#17121d" stroke-width="1.2" stroke-linejoin="round" stroke-linecap="round" />
<path d="M965.0 424.0 L985.0 408.0 L992.0 405.0" fill="none" stroke="#17121d" stroke-width="1.8" stroke-linejoin="round" stroke-linecap="round" />
<path d="M960.0 415.0 L978.0 405.0" fill="none" stroke="#17121d" stroke-width="1.2" stroke-linejoin="round" stroke-linecap="round" />
<path d="M1036.0 408.0 L1052.0 428.0" fill="none" stroke="#17121d" stroke-width="1.4" stroke-linejoin="round" stroke-linecap="round" />
<path d="M966 436 Q980 424 1000 426 Q1018 430 1026 450" stroke="#17121d" stroke-width="3.4" fill="none" stroke-dasharray="1.6 1.4"/>
<path d="M963 438 Q978 420 1001 422.5 Q1022 426 1030 450" stroke="#17121d" stroke-width="1.0" fill="none"/>
<path d="M972 440 Q984 430 1000 432 Q1012 436 1018 450" stroke="#17121d" stroke-width="1.0" fill="none"/>
<g transform="rotate(-25 1034 432)"><rect x="1026" y="423" width="15" height="17" fill="#83758e" stroke="#17121d" stroke-width="2.2"/><rect x="1030" y="428" width="8" height="8" fill="#b8aac3" stroke="#17121d" stroke-width="0.9"/></g>
<path d="M1040.0 416.0 L1046.0 424.0" fill="none" stroke="#17121d" stroke-width="1.2" stroke-linejoin="round" stroke-linecap="round" />
<circle cx="1033.0" cy="450.0" r="2.4" fill="#1f1a27" stroke="#17121d" stroke-width="0.6"/>
<circle cx="1043.8" cy="445.3" r="2" fill="#b3a4be" stroke="#17121d" stroke-width="0.9"/>
<path d="M964 470 L971 448 Q976 440 986 441 L1024 452 L1028 470 L1016 492 L983 484Z" fill="#9f8faa" stroke="#17121d" stroke-width="1.6"/>
<path d="M971 448 Q984 444 990 452 Q994 460 990 468" stroke="#17121d" stroke-width="1.4" fill="none"/>
<path d="M983.3 468.0 L1010.4 472.0 L1007.7 492.0 L979.0 486.0Z" fill="url(#gV)" stroke="#17121d" stroke-width="1.6" stroke-linejoin="round" />
<circle cx="975.5" cy="463.0" r="2" fill="#b3a4be" stroke="#17121d" stroke-width="0.9"/>
<path d="M1018.0 456.0 L1028.0 459.0 L1024.0 476.0 L1015.0 473.0Z" fill="#b3a4be" stroke="#17121d" stroke-width="1.3" stroke-linejoin="round" />
<path d="M1021.0 458.0L1018.0 474.0" stroke="#17121d" stroke-width="0.9" fill="none" />
<circle cx="967.0" cy="436.8" r="3.4" fill="#cabcd5" stroke="#17121d" stroke-width="1.4"/>
<circle cx="967.0" cy="436.8" r="1.53" fill="#433c49" stroke="#17121d" stroke-width="0.8"/>
<circle cx="957.6" cy="475.4" r="3.6" fill="#cabcd5" stroke="#17121d" stroke-width="1.4"/>
<circle cx="957.6" cy="475.4" r="1.62" fill="#433c49" stroke="#17121d" stroke-width="0.8"/>
<circle cx="962.0" cy="466.0" r="2.6" fill="#9f8faa" stroke="#17121d" stroke-width="1.2"/>
<circle cx="962.0" cy="466.0" r="1.1700000000000002" fill="#433c49" stroke="#17121d" stroke-width="0.8"/>
<path d="M960.0 440.0 L956.0 466.0" fill="none" stroke="#17121d" stroke-width="2.4" stroke-linejoin="round" stroke-linecap="round" />
<path d="M957.6 471.0 L984.0 484.0" fill="none" stroke="#17121d" stroke-width="2.0" stroke-linejoin="round" stroke-linecap="round" />
<path d="M1021 480 Q1024 470 1033 470 Q1041 472 1041 480 L1040 486" stroke="#17121d" stroke-width="1.4" fill="none"/>
<circle cx="1030.7" cy="474.0" r="4.6" fill="#b3a4be" stroke="#17121d" stroke-width="1.6"/>
<circle cx="1030.7" cy="474.0" r="2.07" fill="#433c49" stroke="#17121d" stroke-width="0.8"/>
<path d="M1041.0 469.0 L1050.0 471.0" fill="none" stroke="#17121d" stroke-width="1.2" stroke-linejoin="round" stroke-linecap="round" />
<circle cx="1030.5" cy="488.5" r="2.4" fill="#cabcd5" stroke="#17121d" stroke-width="1.2"/>
<circle cx="1030.5" cy="488.5" r="1.08" fill="#433c49" stroke="#17121d" stroke-width="0.8"/>
<circle cx="1056.0" cy="483.0" r="2.4" fill="#cabcd5" stroke="#17121d" stroke-width="1.0"/>
<circle cx="1056.0" cy="483.0" r="1.08" fill="#433c49" stroke="#17121d" stroke-width="0.8"/>
<path d="M951.0 452.0 L964.0 428.0" fill="none" stroke="#17121d" stroke-width="1.2" stroke-linejoin="round" stroke-linecap="round" />
<path d="M953.0 473.0 L948.0 450.0" fill="none" stroke="#17121d" stroke-width="1.0" stroke-linejoin="round" stroke-linecap="round" />
<path d="M950.0 424.0 L962.0 408.0 L966.0 410.0 L955.0 428.0Z" fill="#83758e" stroke="#17121d" stroke-width="1.0" stroke-linejoin="round" />
<path d="M957.0 440.0L975.0 420.0" stroke="#17121d" stroke-width="2.0" fill="none" />
<path d="M975.0 420.0L992.0 412.0" stroke="#17121d" stroke-width="2.0" fill="none" />
<path d="M962.0 446.0L966.0 470.0" stroke="#17121d" stroke-width="2.2" fill="none" />
<path d="M990.0 412.0L1004.0 430.0" stroke="#17121d" stroke-width="1.6" fill="none" />
<path d="M1004.0 430.0L1018.0 444.0" stroke="#17121d" stroke-width="1.6" fill="none" />
<path d="M1010.0 410.0L1030.0 412.0" stroke="#17121d" stroke-width="1.4" fill="none" />
<path d="M1030.0 412.0L1046.0 424.0" stroke="#17121d" stroke-width="1.4" fill="none" />
<path d="M1022.0 440.0L1034.0 452.0" stroke="#17121d" stroke-width="1.8" fill="none" />
<path d="M1034.0 452.0L1046.0 450.0" stroke="#17121d" stroke-width="1.6" fill="none" />
<path d="M1046.0 450.0L1050.0 440.0" stroke="#17121d" stroke-width="1.4" fill="none" />
<path d="M1028.0 456.0L1040.0 468.0" stroke="#17121d" stroke-width="1.6" fill="none" />
<path d="M1012.0 448.0L1022.0 458.0" stroke="#17121d" stroke-width="1.4" fill="none" />
<path d="M1046.0 460.0L1052.0 480.0" stroke="#17121d" stroke-width="1.6" fill="none" />
<path d="M1036.0 462.0L1046.0 462.0" stroke="#17121d" stroke-width="1.4" fill="none" />
<path d="M994.0 436.0L1006.0 444.0" stroke="#17121d" stroke-width="2.2" fill="none" />
<path d="M1000.0 440.0L1012.0 452.0" stroke="#17121d" stroke-width="2.0" fill="none" />
<path d="M980.0 434.0L990.0 440.0" stroke="#17121d" stroke-width="2.0" fill="none" />
<path d="M1066.0 414.0L1072.0 430.0" stroke="#17121d" stroke-width="1.6" fill="none" />
<path d="M1070.0 432.0L1062.0 446.0" stroke="#17121d" stroke-width="1.6" fill="none" />
<path d="M1060.0 450.0L1072.0 458.0" stroke="#17121d" stroke-width="1.6" fill="none" />
<path d="M1054.0 466.0L1066.0 470.0" stroke="#17121d" stroke-width="2.0" fill="none" />
<path d="M1080.0 456.0L1092.0 448.0" stroke="#17121d" stroke-width="1.6" fill="none" />
<path d="M1084.0 462.0L1094.0 470.0" stroke="#17121d" stroke-width="1.4" fill="none" />
<path d="M1098.0 440.0L1100.0 452.0" stroke="#17121d" stroke-width="1.4" fill="none" />
<path d="M1086.0 412.0L1098.0 424.0" stroke="#17121d" stroke-width="1.2" fill="none" />
<path d="M968.0 478.0L980.0 484.0" stroke="#17121d" stroke-width="2.0" fill="none" />
<path d="M1010.0 480.0L1020.0 490.0" stroke="#17121d" stroke-width="1.6" fill="none" />
<path d="M1020.0 490.0L1040.0 488.0" stroke="#17121d" stroke-width="1.6" fill="none" />
<path d="M1000.0 492.0L1012.0 494.0" stroke="#17121d" stroke-width="1.4" fill="none" />
<path d="M1046.0 488.0L1056.0 490.0" stroke="#17121d" stroke-width="2.0" fill="none" />
<path d="M970 444 Q986 432 1002 434 Q1016 438 1024 452" stroke="#17121d" stroke-width="2.2" fill="none" stroke-dasharray="2 1.2"/>
<circle cx="1055.7" cy="432.8" r="8.6" fill="none" stroke="#17121d" stroke-width="1.6"/>
<circle cx="1094.9" cy="459.2" r="9" fill="none" stroke="#17121d" stroke-width="1.2"/>
<circle cx="1061.8" cy="474.0" r="11.5" fill="none" stroke="#17121d" stroke-width="1.4"/>
<path d="M700.0 352.0L716.0 348.0" stroke="#2a2431" stroke-width="1.2" fill="none" />
<path d="M716.0 348.0L740.0 352.0" stroke="#2a2431" stroke-width="1.2" fill="none" />
<path d="M690.0 368.0L700.0 392.0" stroke="#2a2431" stroke-width="1.4" fill="none" />
<path d="M700.0 392.0L716.0 404.0" stroke="#2a2431" stroke-width="1.2" fill="none" />
<path d="M712.0 360.0L724.0 392.0" stroke="#2a2431" stroke-width="1.0" fill="none" />
<path d="M744.0 380.0L752.0 372.0" stroke="#2a2431" stroke-width="1.6" fill="none" />
<path d="M752.0 372.0L756.0 384.0" stroke="#2a2431" stroke-width="1.6" fill="none" />
<path d="M756.0 384.0L764.0 372.0" stroke="#2a2431" stroke-width="1.6" fill="none" />
<path d="M764.0 372.0L768.0 386.0" stroke="#2a2431" stroke-width="1.6" fill="none" />
<path d="M736.0 388.0L800.0 384.0" stroke="#2a2431" stroke-width="1.4" fill="none" />
<path d="M742.0 392.0L802.0 390.0" stroke="#2a2431" stroke-width="1.0" fill="none" />
<path d="M770.0 374.0L806.0 358.0" stroke="#2a2431" stroke-width="1.2" fill="none" />
<path d="M776.0 380.0L810.0 366.0" stroke="#2a2431" stroke-width="1.0" fill="none" />
<path d="M800.0 340.0L806.0 380.0" stroke="#2a2431" stroke-width="1.2" fill="none" />
<path d="M808.0 346.0L812.0 380.0" stroke="#2a2431" stroke-width="1.0" fill="none" />
<path d="M690.0 340.0L700.0 356.0" stroke="#2a2431" stroke-width="1.0" fill="none" />
<path d="M830.0 364.0L860.0 366.0" stroke="#2a2431" stroke-width="1.0" fill="none" />
<path d="M826.0 372.0L856.0 374.0" stroke="#2a2431" stroke-width="1.2" fill="none" />
<path d="M826.0 394.0L846.0 394.0" stroke="#2a2431" stroke-width="1.4" fill="none" />
<path d="M880.0 392.0L912.0 392.0" stroke="#2a2431" stroke-width="1.2" fill="none" />
<path d="M884.0 398.0L910.0 399.0" stroke="#2a2431" stroke-width="1.0" fill="none" />
<path d="M860.0 404.0L884.0 406.0" stroke="#2a2431" stroke-width="1.2" fill="none" />
<path d="M908.0 432.0L930.0 436.0" stroke="#2a2431" stroke-width="1.4" fill="none" />
<path d="M906.0 440.0L928.0 446.0" stroke="#2a2431" stroke-width="1.0" fill="none" />
<path d="M930.0 398.0L944.0 420.0" stroke="#2a2431" stroke-width="1.2" fill="none" />
<path d="M936.0 396.0L950.0 416.0" stroke="#2a2431" stroke-width="1.0" fill="none" />
<path d="M812.0 404.0L828.0 404.0" stroke="#2a2431" stroke-width="1.6" fill="none" />
<path d="M812.0 410.0L828.0 410.0" stroke="#2a2431" stroke-width="1.2" fill="none" />
<path d="M832.0 400.0L832.0 424.0" stroke="#2a2431" stroke-width="1.2" fill="none" />
<path d="M806.0 392.0L806.0 440.0" stroke="#2a2431" stroke-width="1.2" fill="none" />
<path d="M720.0 428.0L730.0 440.0" stroke="#2a2431" stroke-width="1.4" fill="none" />
<path d="M700.0 426.0L712.0 440.0" stroke="#2a2431" stroke-width="1.2" fill="none" />
<path d="M860.0 436.0L904.0 440.0" stroke="#2a2431" stroke-width="1.2" fill="none" />
<path d="M846.0 440.0L846.0 452.0" stroke="#2a2431" stroke-width="1.4" fill="none" />
<path d="M880.0 424.0L880.0 448.0" stroke="#2a2431" stroke-width="1.0" fill="none" />
<path d="M912.0 424.0L912.0 450.0" stroke="#2a2431" stroke-width="1.2" fill="none" />
<circle cx="706.0" cy="383.0" r="10" fill="none" stroke="#2a2431" stroke-width="1.2"/>
<circle cx="694.6" cy="376.5" r="8.5" fill="none" stroke="#2a2431" stroke-width="1.2"/>
<path d="M696 366 Q708 356 722 364 Q730 372 726 384 M688 388 Q694 402 710 402 Q722 398 724 388" stroke="#2a2431" stroke-width="1.6" fill="none" stroke-dasharray="2.2 1.4"/>
</g>
<mask id="wmm" maskUnits="userSpaceOnUse" x="630" y="330" width="340" height="130">
<path d="M652 338 H955 Q962 338 962 345 V418 Q962 424 955 424 H700 Q690 424 684 418 L650 372 Q646 366 646 358 V344 Q646 338 652 338Z" fill="#fff"/>
<rect x="712" y="429" width="15" height="20" rx="2" fill="#fff"/>
<rect x="733" y="429" width="15" height="20" rx="2" fill="#fff"/>
<rect x="754" y="429" width="15" height="20" rx="2" fill="#fff"/>
<rect x="775" y="429" width="15" height="20" rx="2" fill="#fff"/>
<rect x="796" y="429" width="15" height="20" rx="2" fill="#fff"/>
<rect x="817" y="429" width="15" height="20" rx="2" fill="#fff"/>
<rect x="838" y="429" width="15" height="20" rx="2" fill="#fff"/>
<rect x="859" y="429" width="15" height="20" rx="2" fill="#fff"/>
<rect x="880" y="429" width="15" height="20" rx="2" fill="#fff"/>
<rect x="901" y="429" width="15" height="20" rx="2" fill="#fff"/>
<rect x="922" y="429" width="15" height="20" rx="2" fill="#fff"/>
<rect x="943" y="429" width="15" height="20" rx="2" fill="#fff"/>
<rect x="886" y="357" width="27.0" height="14.5" rx="1.5" fill="#000"/>
<rect x="934.5" y="357" width="24.5" height="14.5" rx="1.5" fill="#000"/>
<rect x="854" y="358.5" width="14.0" height="9.0" rx="1.5" fill="#000"/>
<rect x="844" y="344.5" width="10.0" height="8.0" rx="1.5" fill="#000"/>
<rect x="886" y="343" width="13.0" height="4.0" rx="1.5" fill="#000"/>
<rect x="767" y="386" width="18.0" height="15.0" rx="1.5" fill="#000"/>
<rect x="726.6" y="339.5" width="19.1" height="6.5" rx="1.5" fill="#000"/>
<rect x="661.4" y="375.3" width="14.0" height="10.2" rx="1.5" fill="#000"/>
<rect x="726.6" y="357.4" width="8.9" height="6.4" rx="1.5" fill="#000"/>
<rect x="812" y="392.8" width="18.0" height="8.9" rx="1.5" fill="#000"/>
<rect x="849" y="391.5" width="17.0" height="11.5" rx="1.5" fill="#000"/>
<rect x="845.4" y="408" width="11.6" height="9.0" rx="1.5" fill="#000"/>
<rect x="914.5" y="383.8" width="34.5" height="9.0" rx="1.5" fill="#000"/>
<rect x="696.4" y="396.5" width="6.6" height="5.5" rx="1.5" fill="#000"/>
<rect x="905" y="398" width="20.0" height="14.0" rx="1.5" fill="#000"/>
<rect x="870" y="418" width="30.0" height="10.0" rx="1.5" fill="#000"/>
<rect x="790" y="404" width="13.0" height="24.0" rx="1.5" fill="#000"/>
<rect x="700" y="338" width="22.0" height="14.0" rx="1.5" fill="#000"/>
<rect x="748" y="404" width="12.0" height="20.0" rx="1.5" fill="#000"/>
<rect x="925" y="420" width="25.0" height="16.0" rx="1.5" fill="#000"/>
</mask>
<g clip-path="url(#sil)">
<rect x="630" y="330" width="340" height="130" fill="#fff" fill-opacity="0.31" mask="url(#wmm)"/>
<rect x="646" y="342" width="78" height="8" rx="3" fill="#fff" fill-opacity="0.16"/>
<rect x="680" y="342" width="10" height="60" rx="3" fill="#fff" fill-opacity="0.16"/>
<rect x="742" y="346" width="96" height="8" rx="3" fill="#fff" fill-opacity="0.16"/>
<rect x="784" y="352" width="10" height="66" rx="3" fill="#fff" fill-opacity="0.16"/>
<rect x="748" y="378" width="84" height="7" rx="3" fill="#fff" fill-opacity="0.16"/>
<rect x="852" y="346" width="100" height="8" rx="3" fill="#fff" fill-opacity="0.16"/>
<rect x="896" y="352" width="10" height="60" rx="3" fill="#fff" fill-opacity="0.16"/>
<rect x="858" y="376" width="88" height="7" rx="3" fill="#fff" fill-opacity="0.16"/>
<rect x="652" y="362" width="70" height="7" rx="3" fill="#fff" fill-opacity="0.16"/>
<rect x="752" y="410" width="80" height="8" rx="3" fill="#fff" fill-opacity="0.16"/>
<rect x="866" y="408" width="80" height="8" rx="3" fill="#fff" fill-opacity="0.16"/>
</g>
<g stroke="#fafdfd" stroke-width="2" fill="none"><path d="M462 362 L530 322 L600 362 L600 440 L530 478 L462 440Z M482 372 V436 M530 400 V470 M530 400 L596 364 M530 400 L466 366"/></g>
<g fill="#fbfefe"><rect x="640" y="436" width="16" height="20"/><rect x="660" y="436" width="16" height="20"/><rect x="680" y="436" width="16" height="20"/></g>
<g clip-path="url(#sil)">
<path d="M892 404 Q898 398 906 402 L910 410 Q908 419 900 420 Q892 418 892 404Z" fill="#1f1a27" stroke="#17121d" stroke-width="1"/>
<path d="M905.0 410.0 L940.0 448.0" fill="none" stroke="#17121d" stroke-width="2.6" stroke-linejoin="round" stroke-linecap="round" />
<path d="M899.0 386.0 L899.0 402.0" fill="none" stroke="#17121d" stroke-width="1.8" stroke-linejoin="round" stroke-linecap="round" />
<path d="M841.6 417.1 L905.5 419.6" fill="none" stroke="#17121d" stroke-width="2.2" stroke-linejoin="round" stroke-linecap="round" />
<path d="M851.8 387.7 L843.0 406.0" fill="none" stroke="#17121d" stroke-width="2.8" stroke-linejoin="round" stroke-linecap="round" />
<path d="M767 355 Q772 350 780 353 L794 357 Q798 360 794 364 L782 370 Q772 370 768 364Z" fill="#1f1a27" stroke="#17121d" stroke-width="1"/>
<circle cx="789.0" cy="360.5" r="2.4" fill="#d8cfe0" stroke="#17121d" stroke-width="0.8"/>
<circle cx="781.0" cy="365.5" r="1.6" fill="#d8cfe0" stroke="#17121d" stroke-width="0.6"/>
<circle cx="741.5" cy="365.0" r="3.2" fill="none" stroke="#17121d" stroke-width="2.0"/>
<circle cx="743.7" cy="374.2" r="4.6" fill="none" stroke="#17121d" stroke-width="2.2"/>
<path d="M725.7 378.5 L741.5 379.6" fill="none" stroke="#17121d" stroke-width="3.0" stroke-linejoin="round" stroke-linecap="round" />
<rect x="696.8" y="358.6" width="4.6" height="4.6" fill="#17121d"/>
<rect x="699" y="377.4" width="4.6" height="4.6" fill="#17121d"/>
<path d="M730.2 330.0 L733.6 343.5 L743.7 349.2" fill="none" stroke="#17121d" stroke-width="2.6" stroke-linejoin="round" stroke-linecap="round" />
<path d="M868.0 392.0 L868.0 404.0" fill="none" stroke="#17121d" stroke-width="2.6" stroke-linejoin="round" stroke-linecap="round" />
<path d="M813.0 349.0 L813.0 358.0" fill="none" stroke="#17121d" stroke-width="3" stroke-linejoin="round" stroke-linecap="round" />
</g>
<rect x="837.5" y="123.0" width="25" height="16.6" rx="5.5" fill="#a8a8a8" fill-opacity="1.0" stroke="#ffffff" stroke-opacity="0.55" stroke-width="0.8"/>
<text x="850.0" y="136.9" text-anchor="middle" font-family="Liberation Serif, serif" font-size="17.5" fill="#0c0c10">8</text>
<rect x="782.5" y="166.3" width="25" height="16.6" rx="5.5" fill="#a8a8a8" fill-opacity="1.0" stroke="#ffffff" stroke-opacity="0.55" stroke-width="0.8"/>
<text x="795.0" y="180.2" text-anchor="middle" font-family="Liberation Serif, serif" font-size="17.5" fill="#0c0c10">9</text>
<rect x="862.8" y="191.8" width="26" height="16.6" rx="5.5" fill="#a8a8a8" fill-opacity="1.0" stroke="#ffffff" stroke-opacity="0.55" stroke-width="0.8"/>
<text x="875.8" y="205.7" text-anchor="middle" font-family="Liberation Serif, serif" font-size="17.5" fill="#0c0c10">10</text>
<rect x="934.8" y="227.1" width="26" height="16.6" rx="5.5" fill="#a8a8a8" fill-opacity="1.0" stroke="#ffffff" stroke-opacity="0.55" stroke-width="0.8"/>
<text x="947.8" y="241.0" text-anchor="middle" font-family="Liberation Serif, serif" font-size="17.5" fill="#0c0c10">11</text>
<rect x="1002.3" y="230.3" width="26" height="16.6" rx="5.5" fill="#a8a8a8" fill-opacity="1.0" stroke="#ffffff" stroke-opacity="0.55" stroke-width="0.8"/>
<text x="1015.3" y="244.2" text-anchor="middle" font-family="Liberation Serif, serif" font-size="17.5" fill="#0c0c10">12</text>
<rect x="832.1" y="298.5" width="25" height="16.6" rx="5.5" fill="#a8a8a8" fill-opacity="1.0" stroke="#ffffff" stroke-opacity="0.55" stroke-width="0.8"/>
<text x="844.6" y="312.4" text-anchor="middle" font-family="Liberation Serif, serif" font-size="17.5" fill="#0c0c10">4</text>
<rect x="945.5" y="296.0" width="25" height="16.6" rx="5.5" fill="#a8a8a8" fill-opacity="1.0" stroke="#ffffff" stroke-opacity="0.55" stroke-width="0.8"/>
<text x="958.0" y="309.9" text-anchor="middle" font-family="Liberation Serif, serif" font-size="17.5" fill="#0c0c10">6</text>
<rect x="1003.8" y="307.2" width="25" height="16.6" rx="5.5" fill="#a8a8a8" fill-opacity="1.0" stroke="#ffffff" stroke-opacity="0.55" stroke-width="0.8"/>
<text x="1016.3" y="321.1" text-anchor="middle" font-family="Liberation Serif, serif" font-size="17.5" fill="#0c0c10">5</text>
<rect x="983.1" y="371.7" width="25" height="16.6" rx="5.5" fill="#a8a8a8" fill-opacity="1.0" stroke="#ffffff" stroke-opacity="0.55" stroke-width="0.8"/>
<text x="995.6" y="385.6" text-anchor="middle" font-family="Liberation Serif, serif" font-size="17.5" fill="#0c0c10">7</text>
<rect x="825.8" y="353.8" width="25" height="16.6" rx="5.5" fill="#cfcfd2" fill-opacity="1.0" stroke="#ffffff" stroke-opacity="0.55" stroke-width="0.8"/>
<text x="838.3" y="367.7" text-anchor="middle" font-family="Liberation Serif, serif" font-size="17.5" fill="#0c0c10">3</text>
<rect x="764.5" y="436.3" width="25" height="16.6" rx="5.5" fill="#cdcdd0" fill-opacity="1.0" stroke="#ffffff" stroke-opacity="0.55" stroke-width="0.8"/>
<text x="777.0" y="450.2" text-anchor="middle" font-family="Liberation Serif, serif" font-size="17.5" fill="#0c0c10">2</text>
<rect x="721.4" y="472.6" width="28" height="17.6" rx="8" fill="#ffff00" stroke="#b8b000" stroke-width="0.8"/>
<rect x="723.2" y="473.4" width="24.4" height="16" rx="7" fill="none" stroke="#9a9400" stroke-width="0.6"/>
<text x="735.4" y="487.2" text-anchor="middle" font-family="Liberation Serif, serif" font-size="17.5" fill="#0c0c10">1</text>
<!--/CAD-->
</svg>

<!-- ===== bottom form ===== -->
<div id="topline" class="abs"></div>
<div id="form" class="abs"></div>
<span class="lb" style="right:1302px;top:539px">托盘号</span>
<span class="lb" style="right:1302px;top:567px">条码输入</span>
<span class="lb" style="right:1302px;top:594px">生产型号</span>
<span class="lb" style="right:1302px;top:622px">状态</span>
<span class="lb" style="right:1302px;top:649px">螺钉数量</span>
<span class="lb" style="right:923px;top:539px">持续时间</span>
<span class="lb" style="right:1054px;top:649px">角度</span>
<span class="lb" style="right:807px;top:649px">扭矩</span>
<div class="in" style="left:125px;top:535px;width:244px"><span class="m">SYL-KT-MY[23]</span></div>
<div class="in" style="left:504px;top:535px;width:237px"><span class="m">00:2:23</span></div>
<div class="in" style="left:125px;top:562px;width:616px"></div>
<div class="in" style="left:125px;top:590px;width:244px"><span class="m">[100]</span>空调总成</div>
<div class="in" style="left:125px;top:617px;width:244px;background:#ffff00">生产中</div>
<div class="in" style="left:125px;top:645px;width:120px"><span class="m">12 | 0</span></div>
<div class="in" style="left:373px;top:645px;width:127px"><span class="m">0.00</span></div>
<div class="in" style="left:620px;top:645px;width:121px"><span class="m">0.00</span></div>

<span class="cl" style="left:19px;top:692px">吹面风口盖板</span>
<span class="cl" style="left:142px;top:692px">进气壳体盖板</span>
<span class="cl" style="left:260px;top:692px">右吹脚风口盖板</span>
<span class="cl" style="left:521px;top:692px">拧紧枪使能<span class="m" style="font-size:12.2px">1</span></span>
<div class="led" style="left:39px"><i></i></div>
<div class="led" style="left:163px"><i></i></div>
<div class="led" style="left:287px"><i></i></div>
<div class="led" style="left:542px"><i></i></div>

<!-- ===== table ===== -->
<div id="tbl" class="abs">
  <div id="th" class="abs"></div>
  <div class="thc" style="left:0;width:261px">部件</div>
  <div class="thc" style="left:271px;width:404px;border-left:1px solid #e6e6e6;padding-right:15px">条码</div>
  <div id="tr1" class="abs"><span style="position:absolute;left:5px;top:2px;font-weight:bold;font-size:14px;line-height:18px;white-space:nowrap">右泄露执行器</span><i style="position:absolute;left:271px;top:0;width:1px;height:22px;background:#ececec"></i></div>
</div>

<!-- ===== status bar ===== -->
<div id="sep" class="abs"></div>
<div id="status" class="abs">
  <span style="position:absolute;left:4px;top:8px;font-size:17.9px;line-height:22px;color:#e9eeee;white-space:nowrap">系统消息<span class="m t" style="font-size:14.8px;margin-left:-3px;letter-spacing:.35px">: FLOW_0</span></span>
  <i class="abs" style="left:1287px;top:0;width:1px;height:34px;background:#5f7272"></i>
  <i class="abs" style="left:1291px;top:0;width:1px;height:34px;background:#5f7272"></i>
  <span style="position:absolute;left:1315px;top:8px;font-size:17.3px;line-height:22px;color:#dfe7e7">000</span>
  <i class="abs" style="left:1355px;top:9px;width:1px;height:19px;background:#7f8f8f"></i>
  <span style="position:absolute;left:1369px;top:8px;font-size:17.3px;line-height:22px;color:#dfe7e7">000</span>
  <i class="abs" style="left:1231px;top:31px;width:189px;height:3px;background:#fff"></i>
  <svg class="abs" style="left:1202px;top:26px" width="32" height="8" viewBox="0 0 32 8"><path d="M0 8 L4 4.4 L26 0 L30 3 L30 8Z" fill="#f26a2e"/><path d="M8 8 L10 6.4 L25 3.4 L27 8Z" fill="#fff"/></svg>
</div>

</body>
</html>
